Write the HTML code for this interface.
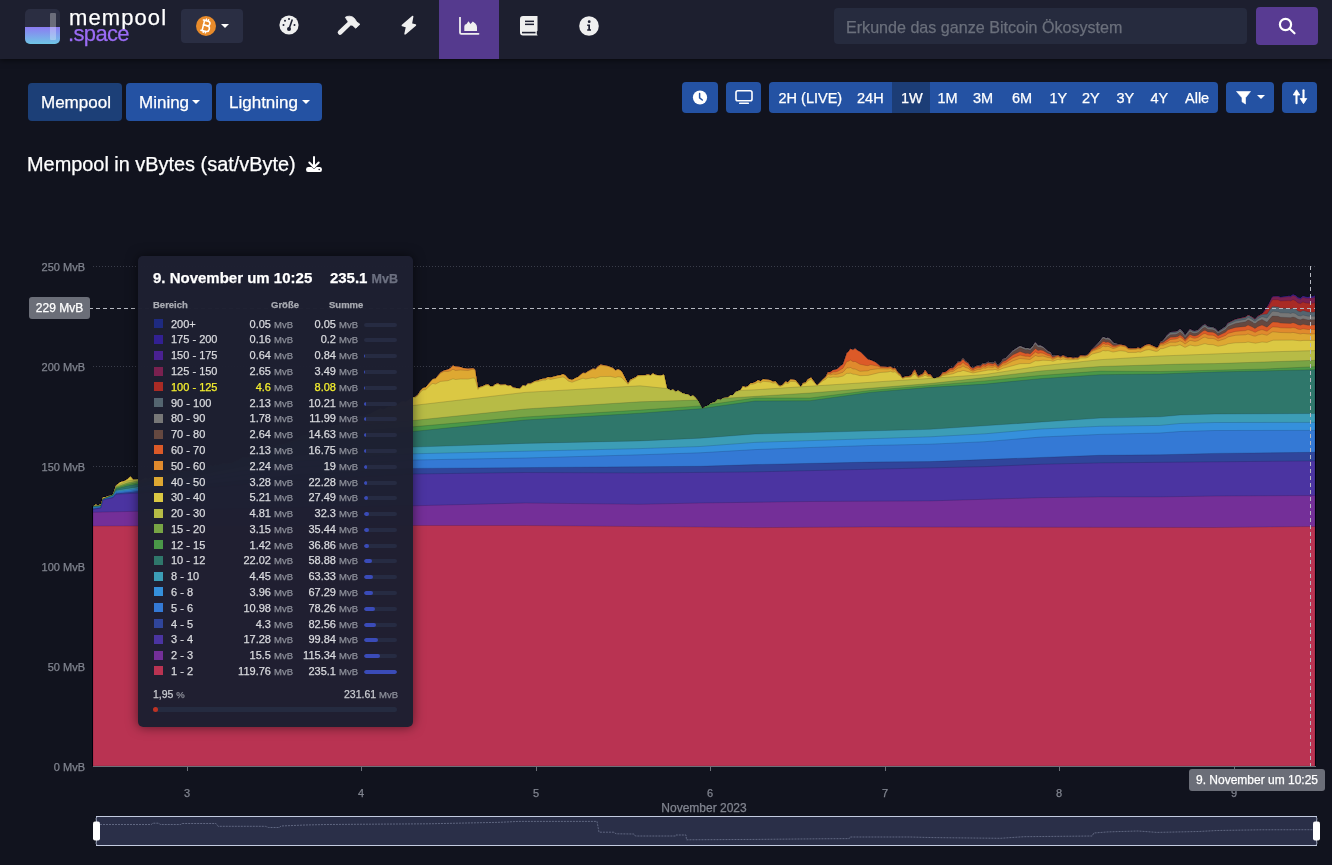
<!DOCTYPE html>
<html><head><meta charset="utf-8">
<style>
*{box-sizing:border-box;margin:0;padding:0}
html,body{-webkit-text-stroke:.25px;will-change:transform;width:1332px;height:865px;overflow:hidden;background:#11131e;font-family:"Liberation Sans",sans-serif;color:#fff}
.hdr{position:absolute;left:0;top:0;width:1332px;height:59px;background:#1d1f2f;box-shadow:0 1px 6px rgba(0,0,0,.6)}
.logo{position:absolute;left:25px;top:9px;width:35px;height:35px;border-radius:5px;overflow:hidden;background:#2b2e42}
.logo .liq{position:absolute;left:0;top:18px;width:35px;height:17px;background:linear-gradient(#8c7cf2,#6fc6e6)}
.logo .bar{position:absolute;left:25px;top:4px;width:6px;height:27px;background:rgba(255,255,255,.3);border-radius:1px}
.brand1{position:absolute;left:69px;top:5.4px;font-size:22px;letter-spacing:1.1px;color:#fff;line-height:26px}
.brand2{position:absolute;left:68px;top:20.6px;font-size:22px;letter-spacing:-.65px;color:#9b6cf5;line-height:26px}
.net{position:absolute;left:181px;top:9px;width:62px;height:34px;background:#2a2e43;border-radius:4px}
.navact{position:absolute;left:439px;top:0;width:60px;height:59px;background:#553a8e}
.ico{position:absolute}
.search{position:absolute;left:834px;top:8px;width:413px;height:36px;background:#262b3e;border-radius:4px}
.search span{position:absolute;left:12px;top:10px;font-size:16.1px;color:#6a6f7b;white-space:nowrap}
.sbtn{position:absolute;left:1256px;top:7px;width:62px;height:38px;background:#583b92;border-radius:4px}
.btn{position:absolute;top:83px;height:38px;background:#2452a3;border-radius:4px;font-size:17px;color:#fff;white-space:nowrap}
.btn span{position:absolute;top:10px}
.caret{position:absolute;width:0;height:0;border-left:4px solid transparent;border-right:4px solid transparent;border-top:4.5px solid #fff}
.tb{position:absolute;top:82px;height:31px;background:#2452a3;border-radius:4px}
.tg{position:absolute;left:769px;top:82px;width:449px;height:31px;background:#2452a3;border-radius:4px;overflow:hidden}
.tg span{position:absolute;top:8px;font-size:14.5px;color:#fff;white-space:nowrap}
.tg .act{position:absolute;left:123px;top:0;width:38px;height:31px;background:#1c3d76}
.title{position:absolute;left:27px;top:153.3px;font-size:19.9px;color:#fff;white-space:nowrap}
.ylab{position:absolute;right:1247px;font-size:11px;color:#80848f;white-space:nowrap;text-align:right}
.xlab{position:absolute;top:787px;font-size:11px;color:#80848f;white-space:nowrap;transform:translateX(-50%)}
.tip{position:absolute;left:138px;top:256px;width:275px;height:471px;background:rgba(29,31,49,.985);border-radius:5px;box-shadow:0 0 12px rgba(0,0,0,.55)}
.tip .h1{position:absolute;left:15px;top:12.5px;font-size:15px;font-weight:bold;white-space:nowrap}
.tip .h2{position:absolute;right:15px;top:12.5px;font-size:15px;font-weight:bold;white-space:nowrap}
.tip .h2 small{color:#6c7080;font-size:12.5px}
.tip .hd{position:absolute;top:43px;font-size:9.5px;font-weight:bold;color:#a9abb2;white-space:nowrap}
.tr{position:absolute;left:0;width:275px;height:15px;font-size:11px;color:#d9dade;white-space:nowrap}
.tr i{position:absolute;left:16px;top:1.5px;width:9px;height:9px}
.tr .rg{position:absolute;left:33px;top:0}
.tr .g1{position:absolute;right:120px;top:0}
.tr .g2{position:absolute;right:55px;top:0}
.tr small{font-size:9.5px;color:#8d909a}
.tr.hl span{color:#f5ef2e}
.tr.hl small{color:#8d909a}
.tr .bar{position:absolute;left:226px;top:5px;width:33px;height:4px;border-radius:2px;background:#262b42;overflow:hidden}
.tr .bar b{position:absolute;left:0;top:0;height:4px;background:#3a4bb8;border-radius:2px}
.foot1{position:absolute;left:15px;top:432px;font-size:10.5px;color:#c9cbd0}
.foot1 small{font-size:9.5px;color:#8d909a}
.foot2{position:absolute;right:15px;top:432px;font-size:10.5px;color:#c9cbd0}
.foot2 small{font-size:9.5px;color:#8d909a}
.pbar{position:absolute;left:15px;top:451px;width:244px;height:5px;border-radius:3px;background:#252b40}
.pbar b{position:absolute;left:0;top:0;width:5px;height:5px;border-radius:3px;background:#bf3223}
.ylbl{position:absolute;left:29px;top:297px;width:61px;height:22px;background:#6b6e78;border-radius:3px;font-size:12px;color:#fff;text-align:center;line-height:22px}
.xlbl{position:absolute;left:1189px;top:769px;width:136px;height:22px;background:#6b6e78;border-radius:3px;font-size:12px;color:#fff;text-align:center;line-height:22px;white-space:nowrap}
</style></head><body>
<div class="hdr">
  <div class="logo"><div class="liq"></div><div class="bar"></div></div>
  <div class="brand1">mempool</div>
  <div class="brand2">.space</div>
  <div class="net">
    <svg class="ico" style="left:14px;top:6px" width="22" height="22" viewBox="0 0 22 22"><circle cx="11" cy="11" r="10" fill="#e88b2b"/><g transform="rotate(14 11 11)" stroke="#fff" stroke-width="1.5" fill="none" stroke-linecap="round"><path d="M8.3 5.8 V16.3"/><path d="M7 5.8 H11.8 Q14.3 5.8 14.3 8.1 Q14.3 10.5 11.8 10.5 H8.3"/><path d="M8.3 10.5 H12.3 Q15 10.5 15 13.4 Q15 16.3 12.3 16.3 H7"/><path d="M9.8 4.2 V5.6 M12 4.2 V5.6 M9.8 16.5 V17.8 M12 16.5 V17.8"/></g></svg>
    <div class="caret" style="left:40px;top:15px"></div>
  </div>
  <div class="navact"></div>
  <!-- gauge -->
  <svg class="ico" style="left:279px;top:15px" width="20" height="20" viewBox="0 0 20 20"><circle cx="10" cy="10" r="9.6" fill="#efefef"/><circle cx="10" cy="14" r="2" fill="#1d1f31"/><path d="M10 14 L13.3 4.5" stroke="#1d1f31" stroke-width="1.6"/><circle cx="4.5" cy="10" r="1" fill="#1d1f31"/><circle cx="6" cy="5.7" r="1" fill="#1d1f31"/><circle cx="10" cy="4" r="1" fill="#1d1f31"/><circle cx="15.5" cy="10" r="1" fill="#1d1f31"/></svg>
  <!-- hammer -->
  <svg class="ico" style="left:330px;top:10px" width="40" height="30" viewBox="0 0 40 30"><path d="M10 22.5 L19 13.8" stroke="#efefef" stroke-width="4.6" stroke-linecap="round"/><path d="M15.3 7.3 Q16.5 6.2 19.5 6.2 Q22.5 6.3 24.5 8.5 L26.3 11.3 L27.3 12.3 L29.9 14.3 L25.8 18.2 L23.6 16.4 L22.6 15.4 L20.2 14.8 L18.3 12 Z" fill="#efefef" stroke="#efefef" stroke-width=".8" stroke-linejoin="round"/></svg>
  <!-- bolt -->
  <svg class="ico" style="left:401px;top:15px" width="16" height="21" viewBox="0 0 16 21"><path d="M11.6 1.6 L1.4 10.4 L5.6 11.8 L4.1 18.8 L14.4 10.1 L10.2 9 Z" fill="#efefef" stroke="#efefef" stroke-width="1.6" stroke-linejoin="round"/></svg>
  <!-- chart -->
  <svg class="ico" style="left:459px;top:17px" width="21" height="18" viewBox="0 0 21 18"><path d="M1 0.5 V15.5 Q1 16.8 2.3 16.8 H19.5" fill="none" stroke="#efefef" stroke-width="1.8" stroke-linecap="round"/><path d="M5.3 14 V9.5 Q5.3 7 7.5 7 L9.5 4.3 L11.5 7 L13.8 4.5 L16.4 6.5 Q18 8 18 10 V14 Z" fill="#efefef"/></svg>
  <!-- book -->
  <svg class="ico" style="left:520px;top:16px" width="18" height="20" viewBox="0 0 18 20"><path d="M3 0 H17.5 V14.8 L16.8 15.5 V18.2 L17.5 19 V19.5 H3 Q0 19.5 0 16.5 V3 Q0 0 3 0 Z" fill="#efefef"/><rect x="2" y="15.8" width="13.5" height="1.6" fill="#1d1f31"/><rect x="5" y="4.6" width="9" height="1.5" fill="#1d1f31"/><rect x="5" y="7.6" width="9" height="1.5" fill="#1d1f31"/></svg>
  <!-- info -->
  <svg class="ico" style="left:579px;top:15.5px" width="20" height="20" viewBox="0 0 20 20"><circle cx="10" cy="10" r="9.8" fill="#efefef"/><circle cx="10.2" cy="5.7" r="1.4" fill="#1d1f31"/><path d="M8.2 8.5 H11 V13.3 H12 V14.8 H8.2 V13.3 H9.3 V10 H8.2 Z" fill="#1d1f31"/></svg>
  <div class="search"><span>Erkunde das ganze Bitcoin Ökosystem</span></div>
  <div class="sbtn"><svg class="ico" style="left:20px;top:9px" width="22" height="20" viewBox="0 0 22 20"><circle cx="9.5" cy="8.5" r="5.6" fill="none" stroke="#fff" stroke-width="2.2"/><path d="M13.5 12.5 L18.5 17.3" stroke="#fff" stroke-width="2.2" stroke-linecap="round"/></svg></div>
</div>

<div class="btn" style="left:28px;width:94px;background:#1c3f77"><span style="left:13px">Mempool</span></div>
<div class="btn" style="left:126px;width:86px"><span style="left:13px">Mining</span><div class="caret" style="left:66px;top:17px"></div></div>
<div class="btn" style="left:216px;width:106px"><span style="left:13px">Lightning</span><div class="caret" style="left:85.5px;top:17px"></div></div>

<div class="tb" style="left:682px;width:36px"><svg class="ico" style="left:10px;top:7.5px" width="16" height="16" viewBox="0 0 16 16"><circle cx="8" cy="7.5" r="7.1" fill="#fff"/><path d="M7.6 3.5 V7.8 L10.3 10" stroke="#2452a3" stroke-width="1.5" fill="none" stroke-linecap="round"/></svg></div>
<div class="tb" style="left:726px;width:35px"><svg class="ico" style="left:9px;top:8px" width="18" height="15" viewBox="0 0 18 15"><rect x="1" y="0.8" width="16" height="10" rx="1.8" fill="none" stroke="#fff" stroke-width="1.6"/><rect x="4" y="12.6" width="10" height="1.5" rx=".7" fill="#fff"/></svg></div>
<div class="tg">
  <div class="act"></div>
  <span style="left:9.5px">2H (LIVE)</span>
  <span style="left:88px">24H</span>
  <span style="left:132px">1W</span>
  <span style="left:168.5px">1M</span>
  <span style="left:204px">3M</span>
  <span style="left:243px">6M</span>
  <span style="left:280.5px">1Y</span>
  <span style="left:313px">2Y</span>
  <span style="left:347.5px">3Y</span>
  <span style="left:381.5px">4Y</span>
  <span style="left:416px">Alle</span>
</div>
<div class="tb" style="left:1226px;width:48px"><svg class="ico" style="left:10px;top:8.5px" width="16" height="14" viewBox="0 0 16 14"><path d="M0.5 0.5 H14.5 L9.5 6.8 V13 L6 10.8 V6.8 Z" fill="#fff" stroke="#fff" stroke-width=".6" stroke-linejoin="round"/></svg><div class="caret" style="left:31px;top:13px"></div></div>
<div class="tb" style="left:1282px;width:35px"><svg class="ico" style="left:10px;top:7px" width="16" height="16" viewBox="0 0 16 16"><path d="M4.5 4 V14.3" stroke="#fff" stroke-width="2.1" stroke-linecap="round"/><path d="M1.2 6 L4.5 0.8 L7.8 6 Z" fill="#fff" stroke="#fff" stroke-width=".8" stroke-linejoin="round"/><path d="M11.5 1.2 V11.5" stroke="#fff" stroke-width="2.1" stroke-linecap="round"/><path d="M8.2 9.5 L11.5 14.7 L14.8 9.5 Z" fill="#fff" stroke="#fff" stroke-width=".8" stroke-linejoin="round"/></svg></div>

<div class="title">Mempool in vBytes (sat/vByte)</div>
<svg class="ico" style="left:305px;top:156px" width="18" height="17" viewBox="0 0 18 17"><path d="M9 1 V10" stroke="#fff" stroke-width="2" stroke-linecap="round"/><path d="M4.3 6.5 L9 11.2 L13.7 6.5" stroke="#fff" stroke-width="2" fill="none" stroke-linecap="round" stroke-linejoin="round"/><path d="M3 11 H6.5 L9 13 L11.5 11 H15 Q17 11 17 13.5 Q17 16 15 16 H3 Q1 16 1 13.5 Q1 11 3 11 Z" fill="#fff"/><circle cx="14.2" cy="13.5" r=".8" fill="#11131f"/></svg>

<svg style="position:absolute;left:0;top:0" width="1332" height="865">
  <g stroke="#3a3d4a" stroke-width="1" stroke-dasharray="1 2">
    <line x1="93" y1="266.5" x2="1315" y2="266.5"/>
    <line x1="93" y1="366.5" x2="1315" y2="366.5"/>
    <line x1="93" y1="466.5" x2="1315" y2="466.5"/>
    <line x1="93" y1="566.5" x2="1315" y2="566.5"/>
    <line x1="93" y1="666.5" x2="1315" y2="666.5"/>
  </g>
  <g stroke="rgba(10,10,20,.3)" stroke-width=".5"><polygon fill="#1e2a80" points="93,766 93,506.4 95.5,504.5 98,505.2 101,503.9 103,497.2 105.5,497.3 108,496.1 110.5,495.7 113,494.2 116,485.6 120.5,481.9 123,481.5 125.5,480.4 128,478.8 130,476.8 130.5,476.6 133,479.4 135.5,479.8 138,479.3 140.5,481.0 145.5,477.8 148,479.3 153,476.5 155.5,478.0 160.5,475.5 168,475.4 170.5,474.3 178,473.1 180.5,471.3 183,471.1 185.5,471.8 188,470.7 190.5,470.9 195.5,469.7 198,468.5 200.5,468.7 205.5,466.8 208,467.2 210.5,465.2 213,466.6 215.5,464.8 218,465.2 223,463.6 230.5,463.4 233,462.8 235.5,460.9 238,460.5 243,457.3 248,457.7 253,454.8 255.5,454.7 258,451.7 263,450.3 265.5,450.5 268,448.5 270.5,449.3 278,445.1 283,444.7 285.5,443.4 293,440.9 298,438.5 300.5,436.7 303,435.8 305.5,435.7 308,435.0 313,432.0 315.5,431.8 320.5,429.2 323,430.5 325.5,427.7 328,428.5 333,425.4 335.5,424.8 338,425.2 340.5,423.2 343,423.6 345.5,422.3 348,420.2 350.5,420.4 358,416.7 360.5,416.0 363,416.8 368,414.3 370.5,414.1 373,412.3 380.5,408.5 383,409.7 385.5,408.7 388,406.8 390.5,407.1 395.5,404.5 398,404.5 400.5,402.2 403,401.0 405.5,402.1 413,397.2 415.5,396.8 418,394.6 420.5,390.5 423,388.0 425.5,387.5 433,379.0 435.5,378.5 440.5,372.5 444,370.4 448,369.4 450.5,368.0 453,365.6 455.5,366.6 460.5,367.0 463,367.9 468,368.8 473,368.3 475,369.3 478,387.6 483,386.1 485.5,384.8 488,384.3 490.5,386.2 493,386.2 495.5,384.1 498,383.6 500.5,384.8 505.5,384.5 508,385.7 510.5,385.3 513,387.6 520,388.6 523,385.3 525.5,386.1 528,383.6 530.5,383.6 535,380.9 538,380.6 540.5,379.3 543,378.7 545.5,378.6 548,376.9 550.5,377.6 558,375.5 560.5,375.2 563,374.1 565.5,375.6 568,378.5 572,380.1 575.5,377.9 578,377.0 583,372.8 585.5,373.1 588,371.3 593,368.6 595.5,369.0 598,366.3 600.5,364.6 608,365.9 613,368.1 615.5,370.3 618,369.2 620.5,370.3 622,371.9 628,383.5 630.5,379.5 635.5,377.3 638,375.2 645.5,375.1 648,374.3 650.5,375.3 653,373.3 655.5,374.7 660.5,375.6 664,374.4 667,388.4 670.5,390.3 673,389.6 675.5,391.7 678,390.6 683,393.6 688,394.5 690.5,396.2 693,395.5 695,397.2 698,400.8 702,408.4 703,408.6 705.5,406.2 708,405.8 710.5,403.4 715.5,401.7 718,399.2 720.5,399.9 723,397.9 728,397.5 730.5,395.2 733,395.1 735.5,392.1 740.5,389.9 743,386.1 745.5,387.1 748,385.9 750.5,383.2 753,382.9 755.5,381.9 758,380.1 760.5,381.2 763,379.2 770,380.0 773,381.7 775.5,381.2 778,384.4 780,386.1 783,384.5 785.5,381.6 788,382.3 790.5,379.6 795.5,380.0 800.5,386.6 801,386.7 803,383.1 805.5,382.5 808,379.3 811,377.4 817,385.4 825.5,376.8 828,372.0 830.5,371.9 833,370.0 835.5,369.7 838,368.5 840.5,366.0 843,364.3 847,352.5 848,352.3 850.5,348.8 853,350.0 855,348.6 858,350.8 860.5,351.9 868,359.4 870.5,359.9 875.5,362.3 880.5,366.5 888,366.9 890.5,366.4 893,368.3 895,367.8 898,372.3 900.5,374.5 902,377.3 903,377.6 905.5,376.3 908,376.3 910.5,375.4 912,373.8 913,371.4 915,369.4 918,376.1 923,373.4 925,370.1 925.5,370.2 928,373.9 930.5,374.2 933,378.0 935,378.5 935.5,377.9 938,377.5 940.5,375.5 943,372.1 945.5,371.9 950.5,367.9 953,367.7 958,361.6 960.5,361.2 963,358.0 965.5,361.1 968,362.4 970.5,366.4 973,368.0 975.5,366.2 978,365.3 980.5,365.8 983,363.0 985.5,363.6 988,361.8 993,362.6 995,361.2 998,365.3 1000.5,362.8 1003,359.1 1005.5,358.3 1013,350.5 1020,346.0 1025.5,348.2 1028,348.1 1030,349.0 1033,345.7 1035,342.6 1035.5,342.6 1038,345.6 1040.5,345.6 1043,346.7 1048,351.2 1050.5,352.3 1052,355.0 1053,355.8 1058,355.1 1060.5,356.7 1063,355.1 1065.5,356.6 1068,357.2 1070.5,356.9 1073,358.0 1075.5,357.3 1078,357.7 1080.5,355.1 1085.5,355.5 1088,354.4 1089,353.6 1090.5,350.9 1098,343.2 1103,336.9 1105,337.5 1105.5,338.2 1108,337.8 1110.5,339.3 1113,342.5 1115.5,343.6 1125.5,345.7 1128,348.0 1130.5,348.5 1136,348.3 1138,347.6 1140.5,348.2 1145.5,344.9 1149,344.0 1155.5,346.9 1156,347.6 1158,346.9 1160.5,341.7 1163,340.4 1167,335.2 1170.5,332.1 1175.5,331.8 1178,330.8 1180,328.7 1183,331.8 1185,335.2 1190,328.9 1193,330.7 1195,331.1 1198,330.0 1203,325.2 1205,324.3 1208,326.7 1213,327.2 1215.5,328.7 1218,331.4 1225.5,326.5 1228,323.1 1235.5,319.3 1245.5,317.1 1248,315.1 1249,315.2 1253,317.6 1254,318.8 1255.5,318.7 1258,316.1 1262,313.8 1263,312.7 1268,305.5 1272,297.3 1273,296.5 1278,296.1 1280.5,297.0 1289,295.7 1290.5,296.0 1293,294.4 1295.5,295.2 1298,297.5 1300.5,298.0 1303,295.9 1305.5,296.8 1308,296.9 1310.5,296.3 1313,296.4 1315,295.6 1315,766"/>
<polygon fill="#322092" points="93,766 93,506.4 95.5,504.5 98,505.2 101,503.9 103,497.2 105.5,497.3 108,496.1 110.5,495.7 113,494.2 116,485.6 120.5,481.9 123,481.5 125.5,480.4 128,478.8 130,476.8 130.5,476.6 133,479.4 135.5,479.8 138,479.3 140.5,481.0 145.5,477.8 148,479.3 153,476.5 155.5,478.0 160.5,475.5 168,475.4 170.5,474.3 178,473.1 180.5,471.3 183,471.1 185.5,471.8 188,470.7 190.5,470.9 195.5,469.7 198,468.5 200.5,468.7 205.5,466.8 208,467.2 210.5,465.2 213,466.6 215.5,464.8 218,465.2 223,463.6 230.5,463.4 233,462.8 235.5,460.9 238,460.5 243,457.3 248,457.7 253,454.8 255.5,454.7 258,451.7 263,450.3 265.5,450.5 268,448.5 270.5,449.3 278,445.1 283,444.7 285.5,443.4 293,440.9 298,438.5 300.5,436.7 303,435.8 305.5,435.7 308,435.0 313,432.0 315.5,431.8 320.5,429.2 323,430.5 325.5,427.7 328,428.5 333,425.4 335.5,424.8 338,425.2 340.5,423.2 343,423.6 345.5,422.3 348,420.2 350.5,420.4 358,416.7 360.5,416.0 363,416.8 368,414.3 370.5,414.1 373,412.3 380.5,408.5 383,409.7 385.5,408.7 388,406.8 390.5,407.1 395.5,404.5 398,404.5 400.5,402.2 403,401.0 405.5,402.1 413,397.2 415.5,396.8 418,394.6 420.5,390.5 423,388.0 425.5,387.5 433,379.0 435.5,378.5 440.5,372.5 444,370.4 448,369.4 450.5,368.0 453,365.6 455.5,366.6 460.5,367.0 463,367.9 468,368.8 473,368.3 475,369.3 478,387.6 483,386.1 485.5,384.8 488,384.3 490.5,386.2 493,386.2 495.5,384.1 498,383.6 500.5,384.8 505.5,384.5 508,385.7 510.5,385.3 513,387.6 520,388.6 523,385.3 525.5,386.1 528,383.6 530.5,383.6 535,380.9 538,380.6 540.5,379.3 543,378.7 545.5,378.6 548,376.9 550.5,377.6 558,375.5 560.5,375.2 563,374.1 565.5,375.6 568,378.5 572,380.1 575.5,377.9 578,377.0 583,372.8 585.5,373.1 588,371.3 593,368.6 595.5,369.0 598,366.3 600.5,364.6 608,365.9 613,368.1 615.5,370.3 618,369.2 620.5,370.3 622,371.9 628,383.5 630.5,379.5 635.5,377.3 638,375.2 645.5,375.1 648,374.3 650.5,375.3 653,373.3 655.5,374.7 660.5,375.6 664,374.4 667,388.4 670.5,390.3 673,389.6 675.5,391.7 678,390.6 683,393.6 688,394.5 690.5,396.2 693,395.5 695,397.2 698,400.8 702,408.4 703,408.6 705.5,406.2 708,405.8 710.5,403.4 715.5,401.7 718,399.2 720.5,399.9 723,397.9 728,397.5 730.5,395.2 733,395.1 735.5,392.1 740.5,389.9 743,386.1 745.5,387.1 748,385.9 750.5,383.2 753,382.9 755.5,381.9 758,380.1 760.5,381.2 763,379.2 770,380.0 773,381.7 775.5,381.2 778,384.4 780,386.1 783,384.5 785.5,381.6 788,382.3 790.5,379.6 795.5,380.0 800.5,386.6 801,386.7 803,383.1 805.5,382.5 808,379.3 811,377.4 817,385.4 825.5,376.8 828,372.0 830.5,371.9 833,370.0 835.5,369.7 838,368.5 840.5,366.0 843,364.3 847,352.5 848,352.3 850.5,348.8 853,350.0 855,348.6 858,350.8 860.5,351.9 868,359.4 870.5,359.9 875.5,362.3 880.5,366.5 888,366.9 890.5,366.4 893,368.3 895,367.8 898,372.3 900.5,374.5 902,377.3 903,377.6 905.5,376.3 908,376.3 910.5,375.4 912,373.8 913,371.4 915,369.4 918,376.1 923,373.4 925,370.1 925.5,370.2 928,373.9 930.5,374.2 933,378.0 935,378.5 935.5,377.9 938,377.5 940.5,375.5 943,372.1 945.5,371.9 950.5,367.9 953,367.7 958,361.6 960.5,361.2 963,358.0 965.5,361.1 968,362.4 970.5,366.4 973,368.0 975.5,366.2 978,365.3 980.5,365.8 983,363.0 985.5,363.6 988,361.8 993,362.6 995,361.2 998,365.3 1000.5,362.8 1003,359.1 1005.5,358.3 1013,350.5 1020,346.0 1025.5,348.2 1028,348.1 1030,349.0 1033,345.7 1035,342.6 1035.5,342.6 1038,345.6 1040.5,345.6 1043,346.7 1048,351.2 1050.5,352.3 1052,355.0 1053,355.8 1058,355.1 1060.5,356.7 1063,355.1 1065.5,356.6 1068,357.2 1070.5,356.9 1073,358.0 1075.5,357.3 1078,357.7 1080.5,355.1 1085.5,355.5 1088,354.4 1089,353.6 1090.5,350.9 1098,343.2 1103,336.9 1105,337.5 1105.5,338.2 1108,337.8 1110.5,339.3 1113,342.5 1115.5,343.6 1125.5,345.7 1128,348.0 1130.5,348.5 1136,348.3 1138,347.6 1140.5,348.2 1145.5,344.9 1149,344.0 1155.5,346.9 1156,347.6 1158,346.9 1160.5,341.7 1163,340.4 1167,335.2 1170.5,332.1 1175.5,331.8 1178,330.8 1180,328.7 1183,331.8 1185,335.2 1190,328.9 1193,330.7 1195,331.1 1198,330.0 1203,325.2 1205,324.3 1208,326.7 1213,327.2 1215.5,328.7 1218,331.4 1225.5,326.5 1228,323.1 1235.5,319.3 1245.5,317.1 1248,315.1 1249,315.2 1253,317.6 1254,318.8 1255.5,318.7 1258,316.1 1262,313.8 1263,312.7 1268,305.5 1272,297.3 1273,296.5 1278,296.1 1280.5,297.1 1289,295.8 1290.5,296.1 1293,294.4 1295.5,295.2 1298,297.6 1300.5,298.0 1303,295.9 1305.5,296.8 1308,297.0 1310.5,296.4 1313,296.5 1315,295.6 1315,766"/>
<polygon fill="#4a2192" points="93,766 93,506.4 95.5,504.5 98,505.2 101,503.9 103,497.2 105.5,497.3 108,496.1 110.5,495.7 113,494.2 116,485.6 120.5,481.9 123,481.5 125.5,480.4 128,478.8 130,476.8 130.5,476.6 133,479.4 135.5,479.8 138,479.3 140.5,481.0 145.5,477.8 148,479.3 153,476.5 155.5,478.0 160.5,475.5 168,475.4 170.5,474.3 178,473.1 180.5,471.3 183,471.1 185.5,471.8 188,470.7 190.5,470.9 195.5,469.7 198,468.5 200.5,468.7 205.5,466.8 208,467.2 210.5,465.2 213,466.6 215.5,464.8 218,465.2 223,463.6 230.5,463.4 233,462.8 235.5,460.9 238,460.5 243,457.3 248,457.7 253,454.8 255.5,454.7 258,451.7 263,450.3 265.5,450.5 268,448.5 270.5,449.3 278,445.1 283,444.7 285.5,443.4 293,440.9 298,438.5 300.5,436.7 303,435.8 305.5,435.7 308,435.0 313,432.0 315.5,431.8 320.5,429.2 323,430.5 325.5,427.7 328,428.5 333,425.4 335.5,424.8 338,425.2 340.5,423.2 343,423.6 345.5,422.3 348,420.2 350.5,420.4 358,416.7 360.5,416.0 363,416.8 368,414.3 370.5,414.1 373,412.3 380.5,408.5 383,409.7 385.5,408.7 388,406.8 390.5,407.1 395.5,404.5 398,404.5 400.5,402.2 403,401.0 405.5,402.1 413,397.2 415.5,396.8 418,394.6 420.5,390.5 423,388.0 425.5,387.5 433,379.0 435.5,378.5 440.5,372.5 444,370.4 448,369.4 450.5,368.0 453,365.6 455.5,366.6 460.5,367.0 463,367.9 468,368.8 473,368.3 475,369.3 478,387.6 483,386.1 485.5,384.8 488,384.3 490.5,386.2 493,386.2 495.5,384.1 498,383.6 500.5,384.8 505.5,384.5 508,385.7 510.5,385.3 513,387.6 520,388.6 523,385.3 525.5,386.1 528,383.6 530.5,383.6 535,380.9 538,380.6 540.5,379.3 543,378.7 545.5,378.6 548,376.9 550.5,377.6 558,375.5 560.5,375.2 563,374.1 565.5,375.6 568,378.5 572,380.1 575.5,377.9 578,377.0 583,372.8 585.5,373.1 588,371.3 593,368.6 595.5,369.0 598,366.3 600.5,364.6 608,365.9 613,368.1 615.5,370.3 618,369.2 620.5,370.3 622,371.9 628,383.5 630.5,379.5 635.5,377.3 638,375.2 645.5,375.1 648,374.3 650.5,375.3 653,373.3 655.5,374.7 660.5,375.6 664,374.4 667,388.4 670.5,390.3 673,389.6 675.5,391.7 678,390.6 683,393.6 688,394.5 690.5,396.2 693,395.5 695,397.2 698,400.8 702,408.4 703,408.6 705.5,406.2 708,405.8 710.5,403.4 715.5,401.7 718,399.2 720.5,399.9 723,397.9 728,397.5 730.5,395.2 733,395.1 735.5,392.1 740.5,389.9 743,386.1 745.5,387.1 748,385.9 750.5,383.2 753,382.9 755.5,381.9 758,380.1 760.5,381.2 763,379.2 770,380.0 773,381.7 775.5,381.2 778,384.4 780,386.1 783,384.5 785.5,381.6 788,382.3 790.5,379.6 795.5,380.0 800.5,386.6 801,386.7 803,383.1 805.5,382.5 808,379.3 811,377.4 817,385.4 825.5,376.8 828,372.0 830.5,371.9 833,370.0 835.5,369.7 838,368.5 840.5,366.0 843,364.3 847,352.5 848,352.3 850.5,348.8 853,350.0 855,348.6 858,350.8 860.5,351.9 868,359.4 870.5,359.9 875.5,362.3 880.5,366.5 888,366.9 890.5,366.4 893,368.3 895,367.8 898,372.3 900.5,374.5 902,377.3 903,377.6 905.5,376.3 908,376.3 910.5,375.4 912,373.8 913,371.4 915,369.4 918,376.1 923,373.4 925,370.1 925.5,370.2 928,373.9 930.5,374.2 933,378.0 935,378.5 935.5,377.9 938,377.5 940.5,375.5 943,372.1 945.5,371.9 950.5,367.9 953,367.7 958,361.6 960.5,361.2 963,358.0 965.5,361.1 968,362.4 970.5,366.4 973,368.0 975.5,366.2 978,365.3 980.5,365.8 983,363.0 985.5,363.6 988,361.8 993,362.6 995,361.2 998,365.3 1000.5,362.8 1003,359.1 1005.5,358.3 1013,350.5 1020,346.0 1025.5,348.2 1028,348.1 1030,349.0 1033,345.7 1035,342.6 1035.5,342.6 1038,345.6 1040.5,345.6 1043,346.7 1048,351.2 1050.5,352.3 1052,355.0 1053,355.8 1058,355.1 1060.5,356.7 1063,355.1 1065.5,356.6 1068,357.2 1070.5,356.9 1073,358.0 1075.5,357.3 1078,357.7 1080.5,355.1 1085.5,355.5 1088,354.4 1089,353.6 1090.5,350.9 1098,343.2 1103,336.9 1105,337.5 1105.5,338.2 1108,337.8 1110.5,339.3 1113,342.5 1115.5,343.6 1125.5,345.7 1128,348.0 1130.5,348.5 1136,348.3 1138,347.6 1140.5,348.2 1145.5,344.9 1149,344.0 1155.5,346.9 1156,347.6 1158,346.9 1160.5,341.7 1163,340.4 1167,335.2 1170.5,332.1 1175.5,331.8 1178,330.8 1180,328.7 1183,331.8 1185,335.2 1190,328.9 1193,330.7 1195,331.1 1198,330.0 1203,325.2 1205,324.3 1208,326.7 1213,327.2 1215.5,328.7 1218,331.4 1225.5,326.5 1228,323.1 1235.5,319.3 1245.5,317.1 1248,315.1 1249,315.2 1253,317.6 1254,318.8 1255.5,318.7 1258,316.1 1262,313.8 1263,312.7 1268,305.5 1272,297.3 1273,296.6 1278,296.2 1280.5,297.2 1289,295.9 1290.5,296.2 1293,294.6 1295.5,295.4 1298,297.8 1300.5,298.2 1303,296.1 1305.5,297.0 1308,297.2 1310.5,296.7 1313,296.8 1315,295.9 1315,766"/>
<polygon fill="#7a2150" points="93,766 93,506.4 95.5,504.5 98,505.2 101,503.9 103,497.2 105.5,497.3 108,496.1 110.5,495.7 113,494.2 116,485.6 120.5,481.9 123,481.5 125.5,480.4 128,478.8 130,476.8 130.5,476.6 133,479.4 135.5,479.8 138,479.3 140.5,481.0 145.5,477.8 148,479.3 153,476.5 155.5,478.0 160.5,475.5 168,475.4 170.5,474.3 178,473.1 180.5,471.3 183,471.1 185.5,471.8 188,470.7 190.5,470.9 195.5,469.7 198,468.5 200.5,468.7 205.5,466.8 208,467.2 210.5,465.2 213,466.6 215.5,464.8 218,465.2 223,463.6 230.5,463.4 233,462.8 235.5,460.9 238,460.5 243,457.3 248,457.7 253,454.8 255.5,454.7 258,451.7 263,450.3 265.5,450.5 268,448.5 270.5,449.3 278,445.1 283,444.7 285.5,443.4 293,440.9 298,438.5 300.5,436.7 303,435.8 305.5,435.7 308,435.0 313,432.0 315.5,431.8 320.5,429.2 323,430.5 325.5,427.7 328,428.5 333,425.4 335.5,424.8 338,425.2 340.5,423.2 343,423.6 345.5,422.3 348,420.2 350.5,420.4 358,416.7 360.5,416.0 363,416.8 368,414.3 370.5,414.1 373,412.3 380.5,408.5 383,409.7 385.5,408.7 388,406.8 390.5,407.1 395.5,404.5 398,404.5 400.5,402.2 403,401.0 405.5,402.1 413,397.2 415.5,396.8 418,394.6 420.5,390.5 423,388.0 425.5,387.5 433,379.0 435.5,378.5 440.5,372.5 444,370.4 448,369.4 450.5,368.0 453,365.6 455.5,366.6 460.5,367.0 463,367.9 468,368.8 473,368.3 475,369.3 478,387.6 483,386.1 485.5,384.8 488,384.3 490.5,386.2 493,386.2 495.5,384.1 498,383.6 500.5,384.8 505.5,384.5 508,385.7 510.5,385.3 513,387.6 520,388.6 523,385.3 525.5,386.1 528,383.6 530.5,383.6 535,380.9 538,380.6 540.5,379.3 543,378.7 545.5,378.6 548,376.9 550.5,377.6 558,375.5 560.5,375.2 563,374.1 565.5,375.6 568,378.5 572,380.1 575.5,377.9 578,377.0 583,372.8 585.5,373.1 588,371.3 593,368.6 595.5,369.0 598,366.3 600.5,364.6 608,365.9 613,368.1 615.5,370.3 618,369.2 620.5,370.3 622,371.9 628,383.5 630.5,379.5 635.5,377.3 638,375.2 645.5,375.1 648,374.3 650.5,375.3 653,373.3 655.5,374.7 660.5,375.6 664,374.4 667,388.4 670.5,390.3 673,389.6 675.5,391.7 678,390.6 683,393.6 688,394.5 690.5,396.2 693,395.5 695,397.2 698,400.8 702,408.4 703,408.6 705.5,406.2 708,405.8 710.5,403.4 715.5,401.7 718,399.2 720.5,399.9 723,397.9 728,397.5 730.5,395.2 733,395.1 735.5,392.1 740.5,389.9 743,386.1 745.5,387.1 748,385.9 750.5,383.2 753,382.9 755.5,381.9 758,380.1 760.5,381.2 763,379.2 770,380.0 773,381.7 775.5,381.2 778,384.4 780,386.1 783,384.5 785.5,381.6 788,382.3 790.5,379.6 795.5,380.0 800.5,386.6 801,386.7 803,383.1 805.5,382.5 808,379.3 811,377.4 817,385.4 825.5,376.8 828,372.0 830.5,371.9 833,370.0 835.5,369.7 838,368.5 840.5,366.0 843,364.3 847,352.5 848,352.3 850.5,348.8 853,350.0 855,348.6 858,350.8 860.5,351.9 868,359.4 870.5,359.9 875.5,362.3 880.5,366.5 888,366.9 890.5,366.4 893,368.3 895,367.8 898,372.3 900.5,374.5 902,377.3 903,377.6 905.5,376.3 908,376.3 910.5,375.4 912,373.8 913,371.4 915,369.4 918,376.1 923,373.4 925,370.1 925.5,370.2 928,373.9 930.5,374.2 933,378.0 935,378.5 935.5,377.9 938,377.5 940.5,375.5 943,372.1 945.5,371.9 950.5,367.9 953,367.7 958,361.6 960.5,361.2 963,358.0 965.5,361.1 968,362.4 970.5,366.4 973,368.0 975.5,366.2 978,365.3 980.5,365.8 983,363.0 985.5,363.6 988,361.8 993,362.6 995,361.2 998,365.3 1000.5,362.8 1003,359.1 1005.5,358.3 1013,350.5 1020,346.0 1025.5,348.2 1028,348.1 1030,349.0 1033,345.7 1035,342.6 1035.5,342.6 1038,345.6 1040.5,345.6 1043,346.7 1048,351.2 1050.5,352.3 1052,355.0 1053,355.8 1058,355.1 1060.5,356.7 1063,355.1 1065.5,356.6 1068,357.2 1070.5,356.9 1073,358.0 1075.5,357.3 1078,357.7 1080.5,355.1 1085.5,355.5 1088,354.4 1089,353.6 1090.5,350.9 1098,343.2 1103,336.9 1105,337.5 1105.5,338.2 1108,337.8 1110.5,339.3 1113,342.5 1115.5,343.6 1125.5,345.7 1128,348.0 1130.5,348.5 1136,348.3 1138,347.6 1140.5,348.2 1145.5,344.9 1149,344.0 1155.5,346.9 1156,347.6 1158,346.9 1160.5,341.7 1163,340.4 1167,335.2 1170.5,332.1 1175.5,331.8 1178,330.8 1180,328.7 1183,331.8 1185,335.2 1190,328.9 1193,330.7 1195,331.1 1198,330.0 1203,325.2 1205,324.3 1208,326.7 1213,327.2 1215.5,328.7 1218,331.4 1225.5,326.5 1228,323.1 1235.5,319.3 1245.5,317.1 1248,315.1 1249,315.2 1253,317.6 1254,318.8 1255.5,318.7 1258,316.1 1262,313.8 1263,312.7 1268,305.5 1272,297.5 1273,296.8 1278,296.5 1280.5,297.6 1289,296.6 1290.5,296.9 1293,295.4 1295.5,296.3 1298,298.6 1300.5,299.2 1303,297.2 1305.5,298.1 1308,298.3 1310.5,297.9 1313,298.0 1315,297.2 1315,766"/>
<polygon fill="#a92b25" points="93,766 93,506.4 95.5,504.5 98,505.2 101,503.9 103,497.2 105.5,497.3 108,496.1 110.5,495.7 113,494.2 116,485.6 120.5,481.9 123,481.5 125.5,480.4 128,478.8 130,476.8 130.5,476.6 133,479.4 135.5,479.8 138,479.3 140.5,481.0 145.5,477.8 148,479.3 153,476.5 155.5,478.0 160.5,475.5 168,475.4 170.5,474.3 178,473.1 180.5,471.3 183,471.1 185.5,471.8 188,470.7 190.5,470.9 195.5,469.7 198,468.5 200.5,468.7 205.5,466.8 208,467.2 210.5,465.2 213,466.6 215.5,464.8 218,465.2 223,463.6 230.5,463.4 233,462.8 235.5,460.9 238,460.5 243,457.3 248,457.7 253,454.8 255.5,454.7 258,451.7 263,450.3 265.5,450.5 268,448.5 270.5,449.3 278,445.1 283,444.7 285.5,443.4 293,440.9 298,438.5 300.5,436.7 303,435.8 305.5,435.7 308,435.0 313,432.0 315.5,431.8 320.5,429.2 323,430.5 325.5,427.7 328,428.5 333,425.4 335.5,424.8 338,425.2 340.5,423.2 343,423.6 345.5,422.3 348,420.2 350.5,420.4 358,416.7 360.5,416.0 363,416.8 368,414.3 370.5,414.1 373,412.3 380.5,408.5 383,409.7 385.5,408.7 388,406.8 390.5,407.1 395.5,404.5 398,404.5 400.5,402.2 403,401.0 405.5,402.1 413,397.2 415.5,396.8 418,394.6 420.5,390.5 423,388.0 425.5,387.5 433,379.0 435.5,378.5 440.5,372.5 444,370.4 448,369.4 450.5,368.0 453,365.6 455.5,366.6 460.5,367.0 463,367.9 468,368.8 473,368.3 475,369.3 478,387.6 483,386.1 485.5,384.8 488,384.3 490.5,386.2 493,386.2 495.5,384.1 498,383.6 500.5,384.8 505.5,384.5 508,385.7 510.5,385.3 513,387.6 520,388.6 523,385.3 525.5,386.1 528,383.6 530.5,383.6 535,380.9 538,380.6 540.5,379.3 543,378.7 545.5,378.6 548,376.9 550.5,377.6 558,375.5 560.5,375.2 563,374.1 565.5,375.6 568,378.5 572,380.1 575.5,377.9 578,377.0 583,372.8 585.5,373.1 588,371.3 593,368.6 595.5,369.0 598,366.3 600.5,364.6 608,365.9 613,368.1 615.5,370.3 618,369.2 620.5,370.3 622,371.9 628,383.5 630.5,379.5 635.5,377.3 638,375.2 645.5,375.1 648,374.3 650.5,375.3 653,373.3 655.5,374.7 660.5,375.6 664,374.4 667,388.4 670.5,390.3 673,389.6 675.5,391.7 678,390.6 683,393.6 688,394.5 690.5,396.2 693,395.5 695,397.2 698,400.8 702,408.4 703,408.6 705.5,406.2 708,405.8 710.5,403.4 715.5,401.7 718,399.2 720.5,399.9 723,397.9 728,397.5 730.5,395.2 733,395.1 735.5,392.1 740.5,389.9 743,386.1 745.5,387.1 748,385.9 750.5,383.2 753,382.9 755.5,381.9 758,380.1 760.5,381.2 763,379.2 770,380.0 773,381.7 775.5,381.2 778,384.4 780,386.1 783,384.5 785.5,381.6 788,382.3 790.5,379.6 795.5,380.0 800.5,386.6 801,386.7 803,383.1 805.5,382.5 808,379.3 811,377.4 817,385.4 825.5,376.8 828,372.0 830.5,371.9 833,370.0 835.5,369.7 838,368.5 840.5,366.0 843,364.3 847,352.5 848,352.3 850.5,348.8 853,350.0 855,348.6 858,350.8 860.5,351.9 868,359.4 870.5,359.9 875.5,362.3 880.5,366.5 888,366.9 890.5,366.4 893,368.3 895,367.8 898,372.3 900.5,374.5 902,377.3 903,377.6 905.5,376.3 908,376.3 910.5,375.4 912,373.8 913,371.4 915,369.4 918,376.1 923,373.4 925,370.1 925.5,370.2 928,373.9 930.5,374.2 933,378.0 935,378.5 935.5,377.9 938,377.5 940.5,375.5 943,372.1 945.5,371.9 950.5,367.9 953,367.7 958,361.6 960.5,361.2 963,358.0 965.5,361.1 968,362.4 970.5,366.4 973,368.0 975.5,366.2 978,365.3 980.5,365.8 983,363.0 985.5,363.6 988,361.8 993,362.6 995,361.2 998,365.3 1000.5,362.8 1003,359.1 1005.5,358.3 1013,350.5 1020,346.0 1025.5,348.2 1028,348.1 1030,349.0 1033,345.7 1035,342.6 1035.5,342.6 1038,345.6 1040.5,345.6 1043,346.7 1048,351.2 1050.5,352.3 1052,355.0 1053,355.8 1058,355.1 1060.5,356.7 1063,355.1 1065.5,356.6 1068,357.2 1070.5,356.9 1073,358.0 1075.5,357.3 1078,357.7 1080.5,355.1 1085.5,355.5 1088,354.4 1089,353.6 1090.5,350.9 1098,343.2 1103,336.9 1105,337.5 1105.5,338.2 1108,337.8 1110.5,339.3 1113,342.5 1115.5,343.6 1125.5,345.7 1128,348.0 1130.5,348.5 1136,348.3 1138,347.6 1140.5,348.2 1145.5,344.9 1149,344.0 1155.5,346.9 1156,347.6 1158,346.9 1160.5,341.7 1163,340.4 1167,335.2 1170.5,332.1 1175.5,331.8 1178,330.8 1180,328.7 1183,331.8 1185,335.2 1190,328.9 1193,330.7 1195,331.1 1198,330.0 1203,325.2 1205,324.3 1208,326.7 1213,327.2 1215.5,328.7 1218,331.4 1225.5,326.5 1228,323.1 1235.5,319.3 1245.5,317.1 1248,315.1 1249,315.2 1253,317.6 1254,318.8 1255.5,318.7 1258,316.1 1263,313.1 1267,309.1 1272,300.3 1273,299.7 1278,299.8 1280.5,301.0 1289,300.6 1290.5,301.0 1293,299.7 1295.5,300.7 1298,303.0 1300.5,303.6 1303,301.9 1305.5,302.9 1308,303.2 1313,303.2 1315,302.6 1315,766"/>
<polygon fill="#546570" points="93,766 93,506.4 95.5,504.5 98,505.2 101,503.9 103,497.2 105.5,497.3 108,496.1 110.5,495.7 113,494.2 116,485.6 120.5,481.9 123,481.5 125.5,480.4 128,478.8 130,476.8 130.5,476.6 133,479.4 135.5,479.8 138,479.3 140.5,481.0 145.5,477.8 148,479.3 153,476.5 155.5,478.0 160.5,475.5 168,475.4 170.5,474.3 178,473.1 180.5,471.3 183,471.1 185.5,471.8 188,470.7 190.5,470.9 195.5,469.7 198,468.5 200.5,468.7 205.5,466.8 208,467.2 210.5,465.2 213,466.6 215.5,464.8 218,465.2 223,463.6 230.5,463.4 233,462.8 235.5,460.9 238,460.5 243,457.3 248,457.7 253,454.8 255.5,454.7 258,451.7 263,450.3 265.5,450.5 268,448.5 270.5,449.3 278,445.1 283,444.7 285.5,443.4 293,440.9 298,438.5 300.5,436.7 303,435.8 305.5,435.7 308,435.0 313,432.0 315.5,431.8 320.5,429.2 323,430.5 325.5,427.7 328,428.5 333,425.4 335.5,424.8 338,425.2 340.5,423.2 343,423.6 345.5,422.3 348,420.2 350.5,420.4 358,416.7 360.5,416.0 363,416.8 368,414.3 370.5,414.1 373,412.3 380.5,408.5 383,409.7 385.5,408.7 388,406.8 390.5,407.1 395.5,404.5 398,404.5 400.5,402.2 403,401.0 405.5,402.1 413,397.2 415.5,396.8 418,394.6 420.5,390.5 423,388.0 425.5,387.5 433,379.0 435.5,378.5 440.5,372.5 444,370.4 448,369.4 450.5,368.0 453,365.6 455.5,366.6 460.5,367.0 463,367.9 468,368.8 473,368.3 475,369.3 478,387.6 483,386.1 485.5,384.8 488,384.3 490.5,386.2 493,386.2 495.5,384.1 498,383.6 500.5,384.8 505.5,384.5 508,385.7 510.5,385.3 513,387.6 520,388.6 523,385.3 525.5,386.1 528,383.6 530.5,383.6 535,380.9 538,380.6 540.5,379.3 543,378.7 545.5,378.6 548,376.9 550.5,377.6 558,375.5 560.5,375.2 563,374.1 565.5,375.6 568,378.5 572,380.1 575.5,377.9 578,377.0 583,372.8 585.5,373.1 588,371.3 593,368.6 595.5,369.0 598,366.3 600.5,364.6 608,365.9 613,368.1 615.5,370.3 618,369.2 620.5,370.3 622,371.9 628,383.5 630.5,379.5 635.5,377.3 638,375.2 645.5,375.1 648,374.3 650.5,375.3 653,373.3 655.5,374.7 660.5,375.6 664,374.4 667,388.4 670.5,390.3 673,389.6 675.5,391.7 678,390.6 683,393.6 688,394.5 690.5,396.2 693,395.5 695,397.2 698,400.8 702,408.4 703,408.6 705.5,406.2 708,405.8 710.5,403.4 715.5,401.7 718,399.2 720.5,399.9 723,397.9 728,397.5 730.5,395.2 733,395.1 735.5,392.1 740.5,389.9 743,386.1 745.5,387.1 748,385.9 750.5,383.2 753,382.9 755.5,381.9 758,380.1 760.5,381.2 763,379.2 770,380.0 773,381.7 775.5,381.2 778,384.4 780,386.1 783,384.5 785.5,381.6 788,382.3 790.5,379.6 795.5,380.0 800.5,386.6 801,386.7 803,383.1 805.5,382.5 808,379.3 811,377.4 817,385.4 825.5,376.8 828,372.0 830.5,371.9 833,370.0 835.5,369.7 838,368.5 840.5,366.0 843,364.3 847,352.5 848,352.3 850.5,348.8 853,350.0 855,348.6 858,350.8 860.5,351.9 868,359.4 870.5,359.9 875.5,362.3 880.5,366.5 888,366.9 890.5,366.4 893,368.3 895,367.8 898,372.3 900.5,374.5 902,377.3 903,377.6 905.5,376.3 908,376.3 910.5,375.4 912,373.8 913,371.4 915,369.4 918,376.1 923,373.4 925,370.1 925.5,370.2 928,373.9 930.5,374.2 933,378.0 935,378.5 935.5,377.9 938,377.5 940.5,375.5 943,372.1 945.5,371.9 950.5,367.9 953,367.7 958,361.6 960.5,361.2 963,358.0 965.5,361.1 968,362.4 970.5,366.4 973,368.0 975.5,366.2 978,365.3 980.5,365.8 983,363.0 985.5,363.6 988,361.8 993,362.6 995,361.2 998,365.3 1000.5,362.8 1003,359.1 1005.5,358.3 1013,350.5 1020,346.0 1025.5,348.2 1028,348.1 1030,349.0 1033,345.7 1035,342.6 1035.5,342.6 1038,345.6 1040.5,345.6 1043,346.7 1048,351.2 1050.5,352.3 1052,355.0 1053,355.8 1058,355.1 1060.5,356.7 1063,355.1 1065.5,356.6 1068,357.2 1070.5,356.9 1073,358.0 1075.5,357.3 1078,357.7 1080.5,355.1 1085.5,355.5 1089,353.6 1090.5,350.9 1098,343.2 1103,336.9 1105,337.5 1105.5,338.2 1108,337.8 1110.5,339.3 1113,342.5 1115.5,343.6 1125.5,345.7 1128,348.0 1130.5,348.5 1136,348.3 1138,347.6 1140.5,348.2 1145.5,344.9 1149,344.0 1155.5,346.9 1156,347.6 1158,346.9 1160.5,341.7 1163,340.4 1167,335.2 1170.5,332.1 1175.5,331.8 1178,330.8 1180,328.7 1183,331.8 1185,335.2 1190,328.9 1193,330.7 1195,331.1 1198,330.0 1203,325.2 1205,324.3 1208,326.7 1213,327.2 1215.5,328.7 1218,331.4 1225.5,326.6 1228,323.2 1235.5,319.6 1245.5,317.5 1248,315.5 1249,315.6 1253,318.0 1254,319.2 1255.5,319.1 1258,316.6 1262,314.4 1267,314.1 1272,306.8 1273,306.4 1278,306.9 1280.5,308.1 1289,308.4 1290.5,308.9 1293,308.0 1295.5,309.0 1298,311.1 1300.5,311.7 1303,310.5 1308,311.9 1313,312.2 1315,311.8 1315,766"/>
<polygon fill="#777777" points="93,766 93,506.4 95.5,504.5 98,505.2 101,503.9 103,497.2 105.5,497.3 108,496.1 110.5,495.7 113,494.2 116,485.6 120.5,481.9 123,481.5 125.5,480.4 128,478.8 130,476.8 130.5,476.6 133,479.4 135.5,479.8 138,479.3 140.5,481.0 145.5,477.8 148,479.3 153,476.5 155.5,478.0 160.5,475.5 168,475.4 170.5,474.3 178,473.1 180.5,471.3 183,471.1 185.5,471.8 188,470.7 190.5,470.9 195.5,469.7 198,468.5 200.5,468.7 205.5,466.8 208,467.2 210.5,465.2 213,466.6 215.5,464.8 218,465.2 223,463.6 230.5,463.4 233,462.8 235.5,460.9 238,460.5 243,457.3 248,457.7 253,454.8 255.5,454.7 258,451.7 263,450.3 265.5,450.5 268,448.5 270.5,449.3 278,445.1 283,444.7 285.5,443.4 293,440.9 298,438.5 300.5,436.7 303,435.8 305.5,435.7 308,435.0 313,432.0 315.5,431.8 320.5,429.2 323,430.5 325.5,427.7 328,428.5 333,425.4 335.5,424.8 338,425.2 340.5,423.2 343,423.6 345.5,422.3 348,420.2 350.5,420.4 358,416.7 360.5,416.0 363,416.8 368,414.3 370.5,414.1 373,412.3 380.5,408.5 383,409.7 385.5,408.7 388,406.8 390.5,407.1 395.5,404.5 398,404.5 400.5,402.2 403,401.0 405.5,402.1 413,397.2 415.5,396.8 418,394.6 420.5,390.5 423,388.0 425.5,387.5 433,379.0 435.5,378.5 440.5,372.5 444,370.4 448,369.4 450.5,368.0 453,365.6 455.5,366.6 460.5,367.0 463,367.9 468,368.8 473,368.3 475,369.3 478,387.6 483,386.1 485.5,384.8 488,384.3 490.5,386.2 493,386.2 495.5,384.1 498,383.6 500.5,384.8 505.5,384.5 508,385.7 510.5,385.3 513,387.6 520,388.6 523,385.3 525.5,386.1 528,383.6 530.5,383.6 535,380.9 538,380.6 540.5,379.3 543,378.7 545.5,378.6 548,376.9 550.5,377.6 558,375.5 560.5,375.2 563,374.1 565.5,375.6 568,378.5 572,380.1 575.5,377.9 578,377.0 583,372.8 585.5,373.1 588,371.3 593,368.6 595.5,369.0 598,366.3 600.5,364.6 608,365.9 613,368.1 615.5,370.3 618,369.2 620.5,370.3 622,371.9 628,383.5 630.5,379.5 635.5,377.3 638,375.2 645.5,375.1 648,374.3 650.5,375.3 653,373.3 655.5,374.7 660.5,375.6 664,374.4 667,388.4 670.5,390.3 673,389.6 675.5,391.7 678,390.6 683,393.6 688,394.5 690.5,396.2 693,395.5 695,397.2 698,400.8 702,408.4 703,408.6 705.5,406.2 708,405.8 710.5,403.4 715.5,401.7 718,399.2 720.5,399.9 723,397.9 728,397.5 730.5,395.2 733,395.1 735.5,392.1 740.5,389.9 743,386.1 745.5,387.1 748,385.9 750.5,383.2 753,382.9 755.5,381.9 758,380.1 760.5,381.2 763,379.2 770,380.0 773,381.7 775.5,381.2 778,384.4 780,386.1 783,384.5 785.5,381.6 788,382.3 790.5,379.6 795.5,380.0 800.5,386.6 801,386.7 803,383.1 805.5,382.5 808,379.3 811,377.4 817,385.4 825.5,376.8 828,372.0 830.5,371.9 833,370.0 835.5,369.7 838,368.5 840.5,366.0 843,364.3 847,352.5 848,352.3 850.5,348.8 853,350.0 855,348.6 858,350.8 860.5,351.9 868,359.4 870.5,359.9 875.5,362.3 880.5,366.5 888,366.9 890.5,366.4 893,368.3 895,367.8 898,372.3 900.5,374.5 902,377.3 903,377.6 905.5,376.3 908,376.3 910.5,375.4 912,373.8 913,371.4 915,369.4 918,376.1 923,373.4 925,370.1 925.5,370.2 928,373.9 930.5,374.2 933,378.0 935,378.5 935.5,377.9 938,377.5 940.5,375.5 943,372.1 945.5,371.9 950.5,367.9 953,367.7 958,361.6 960.5,361.2 963,358.0 965.5,361.1 968,362.4 970.5,366.4 973,368.0 975.5,366.2 978,365.3 980.5,365.8 983,363.0 985.5,363.6 988,361.8 993,362.6 995,361.2 998,365.3 1000.5,362.8 1003,359.1 1005.5,358.3 1013,350.5 1020,346.0 1025.5,348.2 1028,348.1 1030,349.0 1033,345.7 1035,342.6 1035.5,342.6 1038,345.6 1040.5,345.6 1043,346.7 1048,351.2 1050.5,352.3 1052,355.0 1053,355.8 1058,355.1 1060.5,356.7 1063,355.1 1065.5,356.6 1068,357.2 1070.5,356.9 1073,358.0 1075.5,357.3 1078,357.7 1080.5,355.1 1085.5,355.5 1089,353.6 1090.5,350.9 1098,343.2 1103,336.9 1105,337.5 1105.5,338.2 1108,337.8 1110.5,339.3 1113,342.5 1115.5,343.6 1125.5,345.7 1128,348.0 1130.5,348.5 1136,348.3 1138,347.6 1140.5,348.2 1145.5,344.9 1149,344.0 1155.5,346.9 1156,347.6 1158,346.9 1160.5,341.9 1163,340.7 1167,335.7 1170.5,332.9 1175.5,332.8 1178,331.9 1180,330.0 1183,332.9 1185,336.1 1190,330.0 1193,331.7 1195,332.1 1198,331.0 1203,326.4 1205,325.5 1208,327.8 1213,328.2 1215.5,329.6 1218,332.3 1225.5,327.8 1228,324.6 1235.5,321.2 1245.5,319.4 1248,317.6 1249,317.7 1253,319.9 1254,321.1 1255.5,321.0 1258,318.7 1262,316.7 1267,318.1 1272,311.6 1273,311.2 1278,311.7 1280.5,312.8 1289,313.1 1290.5,313.5 1293,312.7 1295.5,313.6 1298,315.5 1300.5,316.1 1303,315.0 1308,316.2 1315,316.2 1315,766"/>
<polygon fill="#654840" points="93,766 93,506.4 95.5,504.5 98,505.2 101,503.9 103,497.2 105.5,497.3 108,496.1 110.5,495.7 113,494.2 116,485.6 120.5,481.9 123,481.5 125.5,480.4 128,478.8 130,476.8 130.5,476.6 133,479.4 135.5,479.8 138,479.3 140.5,481.0 145.5,477.8 148,479.3 153,476.5 155.5,478.0 160.5,475.5 168,475.4 170.5,474.3 178,473.1 180.5,471.3 183,471.1 185.5,471.8 188,470.7 190.5,470.9 195.5,469.7 198,468.5 200.5,468.7 205.5,466.8 208,467.2 210.5,465.2 213,466.6 215.5,464.8 218,465.2 223,463.6 230.5,463.4 233,462.8 235.5,460.9 238,460.5 243,457.3 248,457.7 253,454.8 255.5,454.7 258,451.7 263,450.3 265.5,450.5 268,448.5 270.5,449.3 278,445.1 283,444.7 285.5,443.4 293,440.9 298,438.5 300.5,436.7 303,435.8 305.5,435.7 308,435.0 313,432.0 315.5,431.8 320.5,429.2 323,430.5 325.5,427.7 328,428.5 333,425.4 335.5,424.8 338,425.2 340.5,423.2 343,423.6 345.5,422.3 348,420.2 350.5,420.4 358,416.7 360.5,416.0 363,416.8 368,414.3 370.5,414.1 373,412.3 380.5,408.5 383,409.7 385.5,408.7 388,406.8 390.5,407.1 395.5,404.5 398,404.5 400.5,402.2 403,401.0 405.5,402.1 413,397.2 415.5,396.8 418,394.6 420.5,390.5 423,388.0 425.5,387.5 433,379.0 435.5,378.5 440.5,372.5 444,370.4 448,369.4 450.5,368.0 453,365.6 455.5,366.6 460.5,367.0 463,367.9 468,368.8 473,368.3 475,369.3 478,387.6 483,386.1 485.5,384.8 488,384.3 490.5,386.2 493,386.2 495.5,384.1 498,383.6 500.5,384.8 505.5,384.5 508,385.7 510.5,385.3 513,387.6 520,388.6 523,385.3 525.5,386.1 528,383.6 530.5,383.6 535,380.9 538,380.6 540.5,379.3 543,378.7 545.5,378.6 548,376.9 550.5,377.6 558,375.5 560.5,375.2 563,374.1 565.5,375.6 568,378.5 572,380.1 575.5,377.9 578,377.0 583,372.8 585.5,373.1 588,371.3 593,368.6 595.5,369.0 598,366.3 600.5,364.6 608,365.9 613,368.1 615.5,370.3 618,369.2 620.5,370.3 622,371.9 628,383.5 630.5,379.5 635.5,377.3 638,375.2 645.5,375.1 648,374.3 650.5,375.3 653,373.3 655.5,374.7 660.5,375.6 664,374.4 667,388.4 670.5,390.3 673,389.6 675.5,391.7 678,390.6 683,393.6 688,394.5 690.5,396.2 693,395.5 695,397.2 698,400.8 702,408.4 703,408.6 705.5,406.2 708,405.8 710.5,403.4 715.5,401.7 718,399.2 720.5,399.9 723,397.9 728,397.5 730.5,395.2 733,395.1 735.5,392.1 740.5,389.9 743,386.1 745.5,387.1 748,385.9 750.5,383.2 753,382.9 755.5,381.9 758,380.1 760.5,381.2 763,379.2 770,380.0 773,381.7 775.5,381.2 778,384.4 780,386.1 783,384.5 785.5,381.6 788,382.3 790.5,379.6 795.5,380.0 800.5,386.6 801,386.7 803,383.1 805.5,382.5 808,379.3 811,377.4 817,385.4 825.5,376.8 828,372.0 830.5,371.9 833,370.0 835.5,369.7 838,368.5 840.5,366.0 843,364.3 847,352.5 848,352.3 850.5,348.8 853,350.0 855,348.6 858,350.8 860.5,351.9 868,359.4 870.5,359.9 875.5,362.3 880.5,366.5 888,366.9 890.5,366.4 893,368.3 895,367.8 898,372.3 900.5,374.5 902,377.3 903,377.6 905.5,376.3 908,376.3 910.5,375.4 912,373.8 913,371.4 915,369.4 918,376.1 923,373.4 925,370.1 925.5,370.2 928,373.9 930.5,374.2 933,378.0 935,378.5 935.5,377.9 938,377.5 940.5,375.5 943,372.1 945.5,371.9 950.5,367.9 953,367.7 958,361.6 960.5,361.2 963,358.0 965.5,361.1 968,362.4 970.5,366.4 973,368.0 975.5,366.2 978,365.3 980.5,365.8 983,363.0 985.5,363.7 988,361.9 993,362.8 995,361.5 998,365.5 1000.5,363.1 1003,359.6 1005.5,358.9 1013,351.7 1020,347.6 1025.5,349.7 1028,349.6 1030,350.5 1033,347.5 1035,344.6 1035.5,344.5 1038,347.2 1040.5,347.2 1043,348.1 1048,352.2 1050.5,353.2 1052,355.7 1053,356.4 1058,355.1 1060.5,356.7 1063,355.1 1065.5,356.6 1068,357.2 1070.5,356.9 1073,358.0 1075.5,357.3 1078,357.7 1080.5,355.1 1085.5,355.5 1088,354.4 1092,349.2 1098,344.2 1103,338.6 1105,339.1 1105.5,339.8 1108,339.4 1110.5,340.8 1113,343.6 1115.5,344.3 1120,344.4 1123,345.0 1125.5,345.7 1128,348.0 1130.5,348.5 1136,348.3 1138,347.6 1140.5,348.2 1145.5,344.9 1149,344.0 1155.5,346.9 1156,347.6 1158,346.9 1160.5,342.3 1163,341.5 1167,337.3 1170.5,334.7 1175.5,334.4 1178,333.5 1180,331.7 1183,334.4 1185,337.4 1190,331.7 1193,333.2 1195,333.6 1198,332.5 1203,328.1 1205,327.2 1208,329.4 1213,329.7 1215.5,331.0 1218,333.6 1225.5,329.4 1228,326.4 1235.5,323.4 1245.5,321.8 1248,320.1 1249,320.3 1253,322.4 1254,323.5 1255.5,323.5 1258,321.3 1262,319.5 1267,322.2 1272,316.3 1273,316.0 1278,316.3 1280.5,317.2 1290.5,317.7 1293,317.0 1295.5,317.7 1298,319.3 1300.5,319.8 1303,318.8 1308,319.9 1315,319.7 1315,766"/>
<polygon fill="#dc5a28" points="93,766 93,506.4 95.5,504.5 98,505.2 101,503.9 103,497.2 105.5,497.3 108,496.1 110.5,495.7 113,494.2 116,485.6 120.5,481.9 123,481.5 125.5,480.4 128,478.8 130,476.8 130.5,476.6 133,479.4 135.5,479.8 138,479.3 140.5,481.0 145.5,477.8 148,479.3 153,476.5 155.5,478.0 160.5,475.5 168,475.4 170.5,474.3 178,473.1 180.5,471.3 183,471.1 185.5,471.8 188,470.7 190.5,470.9 195.5,469.7 198,468.5 200.5,468.7 205.5,466.8 208,467.2 210.5,465.2 213,466.6 215.5,464.8 218,465.2 223,463.6 230.5,463.4 233,462.8 235.5,460.9 238,460.5 243,457.3 248,457.7 253,454.8 255.5,454.7 258,451.7 263,450.3 265.5,450.5 268,448.5 270.5,449.3 278,445.1 283,444.7 285.5,443.4 293,440.9 298,438.5 300.5,436.7 303,435.8 305.5,435.7 308,435.0 313,432.0 315.5,431.8 320.5,429.2 323,430.5 325.5,427.7 328,428.5 333,425.4 335.5,424.8 338,425.2 340.5,423.2 343,423.6 345.5,422.3 348,420.2 350.5,420.4 358,416.7 360.5,416.0 363,416.8 368,414.3 370.5,414.1 373,412.3 380.5,408.5 383,409.7 385.5,408.7 388,406.8 390.5,407.1 395.5,404.5 398,404.5 400.5,402.2 403,401.0 405.5,402.1 413,397.2 415.5,396.8 418,394.6 420.5,390.5 423,388.0 425.5,387.5 433,379.0 435.5,378.5 440.5,372.5 444,370.4 448,369.4 450.5,368.0 453,365.6 455.5,366.6 460.5,367.0 463,367.9 468,368.8 473,368.3 475,369.3 478,387.6 483,386.1 485.5,384.8 488,384.3 490.5,386.2 493,386.2 495.5,384.1 498,383.6 500.5,384.8 505.5,384.5 508,385.7 510.5,385.3 513,387.6 520,388.6 523,385.3 525.5,386.1 528,383.6 530.5,383.6 535,380.9 538,380.6 540.5,379.3 543,378.7 545.5,378.6 548,376.9 550.5,377.6 558,375.5 560.5,375.2 563,374.1 565.5,375.6 568,378.5 572,380.1 575.5,377.9 578,377.0 583,372.8 585.5,373.1 588,371.3 593,368.6 595.5,369.0 598,366.3 600.5,364.6 608,365.9 613,368.1 615.5,370.3 618,369.2 620.5,370.3 622,371.9 628,383.5 630.5,379.5 635.5,377.3 638,375.2 645.5,375.1 648,374.3 650.5,375.3 653,373.3 655.5,374.7 660.5,375.6 664,374.4 667,388.4 670.5,390.3 673,389.6 675.5,391.7 678,390.6 683,393.6 688,394.5 690.5,396.2 693,395.5 695,397.2 698,400.8 702,408.4 703,408.6 705.5,406.2 708,405.8 710.5,403.4 715.5,401.7 718,399.2 720.5,399.9 723,397.9 728,397.5 730.5,395.2 733,395.1 735.5,392.1 740.5,389.9 743,386.1 745.5,387.1 748,385.9 750.5,383.2 753,382.9 755.5,381.9 758,380.1 760.5,381.2 763,379.2 770,380.0 773,381.7 775.5,381.2 778,384.4 780,386.1 783,384.5 785.5,381.6 788,382.3 790.5,379.6 795.5,380.0 800.5,386.6 801,386.7 803,383.1 805.5,382.5 808,379.3 811,377.4 817,385.4 825.5,376.8 828,372.0 830.5,371.9 833,370.0 835.5,369.7 838,368.5 840.5,366.0 843,364.3 847,352.5 848,352.3 850.5,348.8 853,350.0 855,348.6 858,350.8 860.5,351.9 868,359.4 870.5,359.9 875.5,362.3 880.5,366.5 888,366.9 890.5,366.4 893,368.3 895,367.8 898,372.3 900.5,374.5 902,377.3 903,377.6 905.5,376.3 908,376.3 910.5,375.4 912,373.8 913,371.4 915,369.4 918,376.1 923,373.4 925,370.1 925.5,370.2 928,373.9 930.5,374.2 933,378.0 935,378.5 935.5,377.9 938,377.5 940.5,375.6 943,372.3 945.5,372.1 950.5,368.3 953,368.2 958,362.4 960.5,362.1 963,359.2 965.5,362.1 968,363.3 970.5,367.0 973,368.5 975.5,366.8 978,366.1 980.5,366.5 983,363.9 985.5,364.6 988,363.0 993,364.0 995,362.8 998,366.4 1000.5,364.3 1003,361.4 1005.5,360.7 1013,354.8 1020,351.6 1025.5,353.4 1028,353.3 1030,354.0 1035.5,348.5 1038,350.4 1040.5,350.1 1043,350.6 1048,353.6 1050.5,354.3 1052,356.4 1053,357.0 1058,355.3 1060.5,356.9 1063,355.3 1065.5,356.8 1068,357.4 1070.5,357.1 1073,358.1 1075.5,357.4 1078,357.8 1080.5,355.3 1085.5,355.7 1088,354.6 1092,349.5 1095.5,347.7 1100.5,344.2 1103,341.5 1105,341.8 1105.5,342.4 1108,342.0 1110.5,343.3 1113,345.4 1115.5,345.5 1120,344.4 1123,345.0 1125.5,345.7 1128,348.0 1130.5,348.5 1136,348.3 1138,347.6 1140.5,348.2 1145.5,344.9 1149,344.0 1155.5,346.9 1156,347.6 1158,346.9 1160.5,342.8 1163,342.5 1170.5,337.2 1175.5,337.1 1178,336.4 1180,334.9 1183,337.1 1185,339.7 1190,334.5 1193,335.8 1195,336.1 1198,335.0 1203,331.0 1205,330.2 1208,332.0 1213,332.2 1215.5,333.4 1218,335.8 1225.5,332.3 1228,329.8 1235.5,327.4 1245.5,326.4 1248,325.1 1253,327.2 1254,328.2 1255.5,328.2 1258,326.5 1262,325.1 1267,327.2 1272,322.4 1273,322.1 1278,322.3 1280.5,323.1 1290.5,323.4 1293,322.8 1295.5,323.4 1298,324.8 1300.5,325.2 1303,324.3 1308,325.2 1315,325.0 1315,766"/>
<polygon fill="#e08a2d" points="93,766 93,506.4 95.5,504.5 98,505.2 101,503.9 103,497.2 105.5,497.3 108,496.1 110.5,495.7 113,494.2 116,485.6 120.5,481.9 123,481.5 125.5,480.4 128,478.8 130,476.8 130.5,476.6 133,479.4 135.5,479.8 138,479.3 140.5,481.0 145.5,477.8 148,479.3 153,476.5 155.5,478.0 160.5,475.5 168,475.4 170.5,474.3 178,473.1 180.5,471.3 183,471.1 185.5,471.8 188,470.7 190.5,470.9 195.5,469.7 198,468.5 200.5,468.7 205.5,466.8 208,467.2 210.5,465.2 213,466.6 215.5,464.8 218,465.2 223,463.6 230.5,463.4 233,462.8 235.5,460.9 238,460.5 243,457.3 248,457.7 253,454.8 255.5,454.7 258,451.7 263,450.3 265.5,450.5 268,448.5 270.5,449.3 278,445.1 283,444.7 285.5,443.4 293,440.9 298,438.5 300.5,436.7 303,435.8 305.5,435.7 308,435.0 313,432.0 315.5,431.8 320.5,429.2 323,430.5 325.5,427.7 328,428.5 333,425.4 335.5,424.8 338,425.2 340.5,423.2 343,423.6 345.5,422.3 348,420.2 350.5,420.4 358,416.7 360.5,416.0 363,416.8 368,414.3 370.5,414.1 373,412.3 380.5,408.5 383,409.7 385.5,408.7 388,406.8 390.5,407.1 395.5,404.5 398,404.5 400.5,402.2 403,401.0 405.5,402.1 413,397.2 415.5,396.8 418,394.6 420.5,390.5 423,388.0 425.5,387.5 433,379.0 435.5,378.5 440.5,372.5 444,370.4 448,369.4 450.5,368.0 453,365.6 455.5,366.6 460.5,367.0 463,367.9 468,368.8 473,368.3 475,369.3 478,387.6 483,386.1 485.5,384.8 488,384.3 490.5,386.2 493,386.2 495.5,384.1 498,383.6 500.5,384.8 505.5,384.5 508,385.7 510.5,385.3 513,387.6 520,388.6 523,385.3 525.5,386.1 528,383.6 530.5,383.6 535,380.9 538,380.6 540.5,379.3 543,378.7 545.5,378.6 548,376.9 550.5,377.6 558,375.5 560.5,375.2 563,374.1 565.5,375.6 568,378.5 572,380.1 575.5,377.9 578,377.0 583,372.8 585.5,373.1 588,371.3 593,368.6 595.5,369.0 598,366.3 600.5,364.6 608,365.9 613,368.1 615.5,370.3 618,369.2 620.5,370.3 622,371.9 628,383.5 630.5,379.5 635.5,377.3 638,375.2 645.5,375.1 648,374.3 650.5,375.3 653,373.3 655.5,374.7 660.5,375.6 664,374.4 667,388.4 670.5,390.3 673,389.6 675.5,391.7 678,390.6 683,393.6 688,394.5 690.5,396.2 693,395.5 695,397.2 698,400.8 702,408.4 703,408.6 705.5,406.2 708,405.8 710.5,403.4 715.5,401.7 718,399.2 720.5,399.9 723,397.9 728,397.5 730.5,395.2 733,395.1 735.5,392.1 740.5,389.9 743,386.1 745.5,387.1 748,385.9 750.5,383.2 753,382.9 755.5,381.9 758,380.1 760.5,381.2 763,379.2 770,380.0 773,381.7 775.5,381.2 778,384.4 780,386.1 783,384.5 785.5,381.6 788,382.3 790.5,379.6 795.5,380.0 800.5,386.6 801,386.7 803,383.1 805.5,382.5 808,379.3 811,377.4 817,385.4 825.5,377.2 828,373.1 830.5,373.4 833,372.0 835.5,372.0 838,371.2 843,368.2 847,361.2 848,361.5 850.5,360.1 853,361.7 855,361.4 860,364.3 865.5,365.4 868,365.7 870.5,364.8 878,366.1 880.5,367.4 888,367.7 890.5,367.1 893,368.9 895,368.4 898,372.7 900.5,374.8 902,377.5 903,377.8 905.5,376.6 908,376.6 910.5,375.9 912,374.5 913,372.3 915,370.7 918,376.5 923,374.2 925,371.6 925.5,371.6 928,374.7 930.5,374.9 933,378.0 935,378.5 935.5,378.0 938,377.5 940.5,376.0 943,373.3 945.5,373.1 950.5,370.0 953,369.8 958,365.2 960.5,364.9 963,362.5 965.5,364.8 968,365.7 970.5,368.7 973,369.9 975.5,368.4 978,367.8 980.5,368.0 983,365.9 985.5,366.4 988,365.0 993,365.7 995,364.7 998,367.5 1003,363.3 1005.5,362.8 1013,357.8 1020,355.1 1025.5,356.3 1028,356.3 1030,356.7 1035.5,352.0 1038,353.4 1040.5,353.0 1043,353.3 1048,355.6 1050.5,356.1 1052,357.8 1053,358.1 1058,356.1 1060.5,357.5 1063,356.1 1065.5,357.4 1068,357.9 1070.5,357.6 1073,358.5 1075.5,357.9 1078,358.1 1080.5,355.9 1085.5,356.1 1088,355.1 1092,350.4 1095.5,349.0 1100.5,346.1 1103,343.7 1105,344.0 1105.5,344.6 1108,344.2 1113,347.0 1115.5,346.7 1120.5,344.9 1125.5,346.1 1128,348.4 1130.5,348.8 1136,348.7 1138,348.0 1140.5,348.5 1145.5,345.3 1149,344.4 1155.5,347.3 1156,347.9 1158,347.3 1160.5,343.8 1163,343.8 1168,341.3 1170.5,339.5 1175.5,339.1 1178,338.3 1180,336.9 1183,339.0 1185,341.3 1190,336.8 1193,338.1 1195,338.3 1198,337.5 1203,334.1 1205,333.4 1208,335.1 1213,335.3 1215.5,336.4 1218,338.4 1225.5,335.5 1228,333.4 1235.5,331.4 1245.5,330.6 1248,329.6 1253,331.3 1254,332.1 1255.5,332.2 1258,330.8 1262,329.6 1267,331.3 1272,327.2 1273,326.9 1278,327.2 1280.5,327.8 1290.5,328.1 1293,327.6 1295.5,328.0 1298,329.2 1300.5,329.5 1303,328.8 1308,329.5 1315,329.4 1315,766"/>
<polygon fill="#dea832" points="93,766 93,506.4 95.5,504.5 98,505.2 101,503.9 103,497.2 105.5,497.3 108,496.1 110.5,495.7 113,494.2 116,485.6 120.5,481.9 123,481.5 125.5,480.4 128,478.8 130,476.8 130.5,476.6 133,479.4 135.5,479.8 138,479.3 140.5,481.0 145.5,477.8 148,479.3 153,476.5 155.5,478.0 160.5,475.5 168,475.4 170.5,474.3 178,473.1 180.5,471.3 183,471.1 185.5,471.8 188,470.7 190.5,470.9 195.5,469.7 198,468.5 200.5,468.7 205.5,466.8 208,467.2 210.5,465.2 213,466.6 215.5,464.8 218,465.2 223,463.6 230.5,463.4 233,462.8 235.5,460.9 238,460.5 243,457.3 248,457.7 253,454.8 255.5,454.7 258,451.7 263,450.3 265.5,450.5 268,448.5 270.5,449.3 278,445.1 283,444.7 285.5,443.4 293,440.9 298,438.5 300.5,436.7 303,435.8 305.5,435.7 308,435.0 313,432.0 315.5,431.8 320.5,429.2 323,430.5 325.5,427.7 328,428.5 333,425.4 335.5,424.8 338,425.2 340.5,423.2 343,423.6 345.5,422.3 348,420.2 350.5,420.4 358,416.7 360.5,416.0 363,416.8 368,414.3 370.5,414.1 373,412.3 380.5,408.5 383,409.7 385.5,408.7 388,406.8 390.5,407.1 395.5,404.5 398,404.5 400.5,402.2 403,401.0 405.5,402.1 413,397.2 415.5,396.8 418,394.6 420.5,390.5 423,388.0 425.5,387.5 432,380.0 433,379.1 435.5,378.8 440.5,373.2 444,371.4 448,371.5 450.5,370.8 453,369.2 455.5,370.5 460.5,370.0 468,370.5 473,369.2 475,369.8 478,387.7 483,386.1 485.5,384.8 488,384.3 490.5,386.2 493,386.2 495.5,384.1 498,383.6 500.5,384.8 505.5,384.5 508,385.7 510.5,385.3 513,387.6 520,388.6 523,385.3 525.5,386.1 528,383.6 530.5,383.6 535,380.9 538,380.6 540.5,379.3 543,378.7 545.5,378.6 548,376.9 550.5,377.6 558,375.5 560.5,375.2 563,374.1 565.5,375.6 568,378.5 572,380.1 575.5,377.9 578,377.0 583,372.9 585.5,373.3 588,371.5 593,369.0 595.5,369.4 598,366.8 600.5,365.2 608,366.3 613,368.3 615.5,370.5 618,369.3 620.5,370.4 622,372.0 628,383.5 630.5,379.5 635.5,377.3 638,375.2 645.5,375.1 648,374.3 650.5,375.3 653,373.3 655.5,374.7 660.5,375.6 664,374.4 667,388.4 670.5,390.3 673,389.6 675.5,391.7 678,390.6 683,393.6 688,394.5 690.5,396.2 693,395.5 695,397.2 698,400.8 702,408.4 703,408.6 705.5,406.2 708,405.8 710.5,403.4 715.5,401.7 718,399.2 720.5,399.9 723,397.9 728,397.5 730.5,395.2 733,395.1 735.5,392.1 740.5,389.9 743,386.1 745.5,387.1 748,385.9 750.5,383.2 753,382.9 755.5,381.9 758,380.1 760.5,381.2 763,379.2 770,380.0 773,381.7 775.5,381.2 778,384.4 780,386.1 783,384.5 785.5,381.6 788,382.3 790.5,379.6 795.5,380.0 800.5,386.6 801,386.7 803,383.1 805.5,382.5 808,379.3 811,377.4 817,385.4 823,379.3 825.5,377.6 828,374.3 830.5,374.9 833,374.1 835.5,374.4 838,374.0 843,372.2 847,367.7 848,368.1 850.5,367.5 853,369.0 855,369.0 860,371.3 868,370.8 870.5,369.7 878,368.8 888,369.1 890.5,368.5 893,370.1 895,369.5 895.5,369.9 898,373.3 900.5,375.2 902,377.7 903,378.0 905.5,377.0 908,377.0 910.5,376.4 912,375.2 913,373.4 915,372.1 918,377.0 923,375.1 925,373.0 928,375.5 930.5,375.7 933,378.1 935,378.5 935.5,378.0 938,377.6 940.5,376.4 943,374.3 945.5,374.1 950.5,371.7 953,371.5 958,368.0 960.5,367.7 963,365.9 965.5,367.5 968,368.2 970.5,370.3 973,371.2 978,369.4 980.5,369.6 983,367.9 985.5,368.2 988,367.1 993,367.4 995,366.6 998,368.7 1003,365.3 1005.5,364.8 1013,360.8 1020,358.5 1030,359.5 1035.5,355.5 1038,356.5 1043,356.1 1048,357.6 1050.5,357.9 1052,359.2 1053,359.3 1058,356.9 1060.5,358.1 1063,356.8 1065.5,357.9 1068,358.4 1070.5,358.1 1073,358.9 1075.5,358.3 1078,358.5 1080.5,356.4 1085.5,356.6 1088,355.6 1092,351.3 1100.5,348.1 1103,346.0 1105.5,346.7 1108,346.3 1113,348.6 1115.5,348.0 1120.5,345.9 1125.5,347.0 1128,349.1 1130.5,349.5 1136,349.3 1138,348.7 1140.5,349.2 1145.5,346.2 1149,345.4 1155.5,348.0 1156,348.6 1158,348.0 1160.5,345.0 1163,345.3 1170.5,342.2 1175.5,342.3 1178,341.8 1180,340.7 1183,342.3 1185,344.1 1190,340.4 1195,341.4 1198,340.7 1203,337.7 1205,337.1 1208,338.4 1213,338.5 1215.5,339.3 1218,341.0 1225.5,338.6 1228,336.9 1235.5,335.3 1245.5,334.8 1248,334.0 1254,336.1 1255.5,336.1 1258,335.0 1262,334.1 1267,335.3 1272,332.0 1273,331.8 1280.5,332.5 1290.5,332.8 1293,332.4 1300.5,334.0 1303,333.4 1308,334.0 1315,333.9 1315,766"/>
<polygon fill="#dbc843" points="93,766 93,506.4 95.5,504.5 98,505.2 101,503.9 103,497.2 105.5,497.3 108,496.1 110.5,495.7 113,494.2 116,485.6 120.5,481.9 123,481.5 125.5,480.4 128,478.8 130,476.8 130.5,476.6 133,479.4 135.5,479.8 138,479.3 140.5,481.0 145.5,477.8 148,479.3 153,476.5 155.5,478.0 160.5,475.5 168,475.4 170.5,474.3 178,473.1 180.5,471.3 183,471.1 185.5,471.8 188,470.7 190.5,470.9 195.5,469.7 198,468.5 200.5,468.7 205.5,466.8 208,467.2 210.5,465.2 213,466.6 215.5,464.8 218,465.2 223,463.6 230.5,463.4 233,462.8 235.5,460.9 238,460.5 243,457.3 248,457.7 253,454.8 255.5,454.7 258,451.7 263,450.3 265.5,450.5 268,448.5 270.5,449.3 278,445.1 283,444.7 285.5,443.4 293,440.9 298,438.5 300.5,436.7 303,435.8 305.5,435.7 308,435.0 313,432.0 315.5,431.8 320.5,429.2 323,430.5 325.5,427.7 328,428.5 333,425.4 335.5,424.8 338,425.2 340.5,423.2 343,423.6 345.5,422.3 348,420.2 350.5,420.4 358,416.7 360.5,416.0 363,416.8 368,414.3 370.5,414.1 373,412.3 380.5,408.5 383,409.7 385.5,408.7 388,406.9 390.5,407.2 395.5,404.6 398,404.6 400.5,402.3 403,401.2 405.5,402.2 413,397.2 415.5,397.2 418,395.5 420.5,391.9 423,390.0 425.5,389.7 432,383.7 433,383.4 435.5,384.1 440.5,381.4 448,380.7 453,378.8 455.5,379.5 460.5,379.0 468,379.1 473,378.0 475,378.3 478,389.4 479,387.8 483,386.6 485.5,385.3 488,384.9 490.5,386.6 493,386.6 495.5,384.6 498,384.0 500.5,385.2 505.5,384.8 508,385.9 510.5,385.5 513,387.8 520,388.7 523,385.3 525.5,386.1 528,383.8 530.5,384.0 535,381.7 538,381.6 543,380.1 545.5,380.1 548,378.7 550.5,379.4 563,376.9 565.5,378.3 568,380.9 572,382.3 583,378.2 585.5,379.0 593,377.7 595.5,378.3 600.5,376.6 610.5,376.4 615.5,377.6 618,376.7 620.5,377.0 622,377.8 628,384.3 630.5,380.7 635.5,377.9 638,375.9 645.5,375.6 648,374.7 650.5,375.6 653,373.7 655.5,375.0 660.5,375.8 664,374.5 667,388.4 670.5,390.3 673,389.6 675.5,391.7 678,390.6 683,393.6 688,394.5 690.5,396.2 693,395.5 695,397.2 698,400.8 702,408.4 703,408.6 705.5,406.2 708,405.8 710.5,403.4 715.5,401.7 718,399.2 720.5,399.9 723,397.9 728,397.5 730.5,395.2 733,395.1 735.5,392.1 740.5,389.9 743,386.4 745.5,387.4 748,386.5 750.5,384.3 753,384.2 755.5,383.4 758,381.9 760.5,382.8 763,381.3 770,381.9 773,383.2 775.5,382.8 778,385.3 780,386.5 783,385.3 785.5,383.0 788,383.5 790.5,381.4 795.5,381.6 800.5,386.6 801,386.7 803,383.9 805.5,383.4 808,380.9 811,379.3 817,385.4 823,380.7 825.5,379.4 828,377.1 830.5,377.6 833,377.1 838,377.2 843,376.1 847,373.2 848,373.5 850.5,373.2 853,374.2 855,374.3 860,375.7 865.5,375.5 868,375.4 880,372.5 888,372.0 890.5,371.3 893,372.3 895,371.7 895.5,372.0 898,374.6 900.5,376.1 902,378.2 903,378.4 905.5,377.6 910.5,377.3 912,376.4 913,375.2 915,374.3 918,377.7 923,376.5 925,375.2 928,376.8 930.5,376.8 933,378.1 935,378.5 935.5,378.0 938,377.7 943,375.7 953,373.8 958,371.7 960.5,371.5 963,370.4 973,373.0 988,370.1 993,370.0 995,369.4 998,370.4 1003,368.3 1020,363.7 1030,363.5 1035.5,360.8 1038,360.9 1043,360.2 1050.5,360.6 1053,361.3 1058,359.3 1060.5,360.0 1063,359.0 1068,359.9 1078,359.6 1080.5,358.1 1085.5,358.0 1088,357.3 1092,354.1 1100.5,351.9 1103,350.5 1105.5,350.9 1108,350.6 1113,352.1 1120,350.7 1125.5,351.3 1128,352.5 1136,352.4 1138,351.9 1140.5,352.2 1145.5,350.2 1149,349.6 1156,351.4 1158,351.0 1160.5,348.7 1163,348.6 1170.5,345.9 1175.5,345.9 1180,344.7 1185,347.4 1190,345.0 1195,346.0 1198,345.6 1205,343.6 1208,344.5 1213,344.7 1218,346.3 1225.5,344.8 1228,343.8 1235.5,342.8 1245.5,342.5 1248,342.0 1255.5,343.2 1262,342.0 1267,342.4 1273,340.2 1293,340.1 1300.5,340.8 1303,340.4 1315,340.4 1315,766"/>
<polygon fill="#b7bb46" points="93,766 93,506.4 94,505.8 101,505.0 103,499.0 113,494.4 116,486.0 127,481.0 138,479.3 140.5,481.0 145.5,477.8 148,479.3 153,476.5 155.5,478.0 160.5,475.5 168,475.4 170.5,474.3 178,473.1 180.5,471.3 183,471.1 185.5,471.8 188,470.7 190.5,470.9 195.5,469.7 198,468.5 200.5,468.7 205.5,466.8 208,467.2 210.5,465.2 213,466.6 215.5,464.8 218,465.2 223,463.6 230.5,463.4 233,462.8 235.5,460.9 238,460.5 243,457.3 248,457.7 253,454.8 255.5,454.7 258,451.7 263,450.3 265.5,450.5 268,448.5 270.5,449.3 278,445.1 283,444.7 285.5,443.4 293,440.9 298,438.5 300.5,436.7 303,435.8 305.5,435.7 308,435.0 313,432.0 315.5,431.8 320.5,429.2 323,430.5 325.5,427.7 328,428.5 333,425.4 335.5,424.8 338,425.2 340.5,423.2 343,423.6 345.5,422.3 348,420.2 350.5,420.4 358,416.7 360.5,416.0 363,416.8 368,414.3 370.5,414.1 373,412.3 380,408.9 381,408.8 383,409.7 386.5,408.2 413,405.5 525,392.4 640,385.8 667.5,388.6 670.5,390.3 673,389.6 675.5,391.7 678,390.6 683,393.6 688,394.5 690.5,396.2 693,395.5 695,397.2 698,400.8 702,408.4 703,408.6 705.5,406.2 708,405.8 710.5,403.4 715.5,401.7 718,399.2 720.5,399.9 723,397.9 728,397.5 730.5,395.2 733,395.1 735.5,392.1 739.5,390.4 755,389.8 933.5,378.2 935,378.5 935.5,378.0 985,374.5 1040,366.0 1100,359.7 1160,356.0 1265,352.0 1315,350.6 1315,766"/>
<polygon fill="#78a445" points="93,766 93,506.4 94,506.0 101,505.2 103,499.1 113,494.6 116,487.0 127,483.0 139.5,480.5 140.5,481.0 143,479.4 146,478.5 148,479.3 153,476.5 155.5,478.0 160.5,475.5 168,475.4 170.5,474.3 178,473.1 180.5,471.3 183,471.1 185.5,471.8 188,470.7 190.5,470.9 195.5,469.7 198,468.5 200.5,468.7 205.5,466.8 208,467.2 210.5,465.2 213,466.6 215.5,464.8 218,465.2 223,463.6 230.5,463.4 233,462.8 235.5,460.9 238,460.5 243,457.3 248,457.7 253,454.8 255.5,454.7 258,451.7 263,450.3 265.5,450.5 268,448.5 270.5,449.3 278,445.1 283,444.7 285.5,443.4 293,440.9 298,438.5 300.5,436.7 303,435.8 305.5,435.7 308,435.0 313,432.0 315.5,431.8 320.5,429.2 323,430.5 325.5,427.9 328,428.5 330,427.5 413,420.5 525,409.0 640,401.8 697,400.1 698,400.8 700.5,405.0 702,408.4 703,408.6 705.5,406.2 708,405.8 710.5,403.4 715.5,401.7 718,399.2 720.5,399.9 722.5,398.4 810,393.0 930,383.5 985,377.6 1040,371.0 1100,366.5 1180,364.1 1215,363.6 1315,360.3 1315,766"/>
<polygon fill="#4a9848" points="93,766 93,506.4 101,505.4 103,499.1 113,494.8 116,488.0 127,484.5 138,482.5 154.5,477.8 155.5,478.0 157.5,476.9 163,475.3 168,475.4 170.5,474.3 178,473.1 180.5,471.3 183,471.1 185.5,471.8 188,470.7 190.5,470.9 195.5,469.7 198,468.5 200.5,468.7 205.5,466.8 208,467.2 210.5,465.2 213,466.6 215.5,464.8 218,465.2 223,463.6 230.5,463.4 233,462.8 235.5,460.9 238,460.5 243,457.3 248,457.7 253,454.8 255.5,454.7 258,451.7 263,450.3 265.5,450.5 268,448.5 270.5,449.3 278,445.1 283,444.7 285.5,443.4 293,440.9 298,438.5 300.5,436.7 303,435.8 413,426.8 525,417.0 640,410.1 700.5,405.9 701,406.1 702,408.4 703,408.6 705.5,406.2 708,405.8 709.5,404.6 755,398.0 810,398.0 870,390.5 985,380.9 1040,375.5 1100,371.1 1160,371.5 1265,369.0 1315,366.7 1315,766"/>
<polygon fill="#2f776b" points="93,766 93,506.6 101,505.7 103,499.2 113,495.0 116,489.0 127,486.0 138,484.0 184,471.5 185.5,471.8 188,470.7 190.5,470.9 195.5,469.7 198,468.5 200.5,468.7 205.5,466.8 208,467.2 210.5,465.2 213,466.6 215.5,464.8 218,465.2 223,463.6 230.5,463.4 233,462.8 235.5,460.9 238,460.5 243,457.3 248,457.7 253,454.8 255.5,454.7 258,451.7 260.5,450.9 263,450.3 265.5,450.5 268,448.7 270.5,449.3 276,446.5 300,440.0 413,431.5 525,420.0 640,413.2 703,408.6 703.5,408.2 755,401.0 810,400.7 870,392.4 930,387.3 985,384.1 1040,378.7 1100,374.7 1160,374.0 1215,372.0 1315,369.7 1315,766"/>
<polygon fill="#3c9db6" points="93,766 93,507.0 101,506.0 103,499.3 113,495.5 116,490.5 138,487.0 300,455.0 413,447.1 525,443.4 640,440.9 700,438.2 755,434.0 930,429.3 1100,418.1 1160,416.8 1180,415.0 1215,414.0 1315,413.5 1315,766"/>
<polygon fill="#3590dc" points="93,766 93,507.6 101,506.5 103,499.4 113,496.0 116,491.5 138,488.5 300,461.0 413,453.8 640,448.6 700,446.5 755,442.4 930,436.8 985,433.8 1040,429.0 1100,426.3 1160,425.4 1180,423.5 1215,422.5 1315,422.4 1315,766"/>
<polygon fill="#3479d5" points="93,766 93,508.2 101,507.0 103,499.6 113,496.5 116,492.5 138,490.0 300,467.0 413,460.0 525,458.0 640,454.8 700,452.8 755,449.6 810,447.5 870,445.5 930,444.2 985,441.7 1040,437.1 1100,434.4 1160,433.0 1180,431.5 1215,430.5 1315,430.4 1315,766"/>
<polygon fill="#30459b" points="93,766 93,508.8 101,507.5 103,499.8 113,497.0 116,493.5 300,474.5 413,468.4 700,466.3 755,464.6 870,462.1 930,461.6 1100,455.3 1160,454.8 1215,453.4 1315,452.3 1315,766"/>
<polygon fill="#4b34a1" points="93,766 93,509.4 101,508.0 103,500.0 113,497.8 116,494.3 138,493.0 300,480.0 413,474.0 525,472.5 640,473.0 755,471.9 985,466.6 1040,464.3 1100,462.9 1315,460.9 1315,766"/>
<polygon fill="#742f98" points="93,766 93,512.3 300,507.5 413,505.8 525,503.0 640,504.3 700,503.0 810,501.5 930,500.9 1040,497.7 1100,496.9 1160,496.9 1215,496.0 1315,495.5 1315,766"/>
<polygon fill="#b93352" points="93,766 93,526.1 300,525.5 525,525.5 755,527.6 870,527.0 1215,527.5 1315,526.5 1315,766"/></g>
  <line x1="93" y1="766.5" x2="1316" y2="766.5" stroke="#6e7079" stroke-width="1"/>
  <g stroke="#6e7079" stroke-width="1">
    <line x1="187.5" y1="766" x2="187.5" y2="771"/><line x1="361.5" y1="766" x2="361.5" y2="771"/><line x1="536.5" y1="766" x2="536.5" y2="771"/><line x1="710.5" y1="766" x2="710.5" y2="771"/><line x1="885.5" y1="766" x2="885.5" y2="771"/><line x1="1059.5" y1="766" x2="1059.5" y2="771"/><line x1="1234.5" y1="766" x2="1234.5" y2="771"/>
  </g>
  <line x1="89" y1="308.5" x2="1315" y2="308.5" stroke="#b5b8c0" stroke-width="1" stroke-dasharray="4 3"/>
  <line x1="1310.5" y1="266" x2="1310.5" y2="766" stroke="#b5b8c0" stroke-width="1" stroke-dasharray="4 3"/>
  <!-- datazoom -->
  <rect x="96" y="816" width="1221" height="30" fill="#2a2f48"/><path d="M96 816.5 H1317 M96 845.5 H1317" stroke="#c3cbe0" stroke-width="1.2"/><path d="M97 816.5 Q95.5 818 96.5 822 M97 845.5 Q95.5 844 96.5 840 M1316 816.5 Q1317.5 818 1316.5 822 M1316 845.5 Q1317.5 844 1316.5 840" stroke="#c3cbe0" stroke-width=".8" fill="none"/>
  <polyline fill="none" stroke="#5f6680" stroke-width="1" stroke-dasharray="2 1" points="97,824.5 151.5,824.5 152.5,823.2 159,823.2 160,824.5 180.8,824.5 181.5,823.5 216,823.5 218,826.3 265.4,826.3 268.5,827.5 279.3,827.5 281,826 305.5,825 327,824.5 428.6,823.8 500,822.3 518.5,821.4 597,821.4 599,832.2 613.9,832.2 616,833.8 633.9,834 635.4,836 675.4,836 676,835 686,835 686.5,839.8 757,839.4 820,838.8 849.3,838.6 850,837 910,837 933.8,837.6 1000.3,838.3 1024,836.7 1092.2,836 1093.8,833 1108,831.9 1138,831 1157,832.4 1198.3,831.5 1217.4,830.5 1261.7,829.8 1316,829.7"/>
  <rect x="93" y="821.5" width="7" height="19" rx="2" fill="#fff"/>
  <rect x="1313" y="821.5" width="7" height="19" rx="2" fill="#fff"/>
</svg>

<div class="ylab" style="top:260.5px">250 MvB</div>
<div class="ylab" style="top:360.5px">200 MvB</div>
<div class="ylab" style="top:460.5px">150 MvB</div>
<div class="ylab" style="top:560.5px">100 MvB</div>
<div class="ylab" style="top:660.5px">50 MvB</div>
<div class="ylab" style="top:760.5px">0 MvB</div>
<div class="xlab" style="left:187px">3</div>
<div class="xlab" style="left:361px">4</div>
<div class="xlab" style="left:536px">5</div>
<div class="xlab" style="left:710px">6</div>
<div class="xlab" style="left:885px">7</div>
<div class="xlab" style="left:1059px">8</div>
<div class="xlab" style="left:1234px">9</div>
<div class="xlab" style="left:704px;top:800.5px;font-size:12px">November 2023</div>
<div class="ylbl">229 MvB</div>
<div class="xlbl">9. November um 10:25</div>

<div class="tip">
  <div class="h1">9. November um 10:25</div>
  <div class="h2">235.1 <small>MvB</small></div>
  <div class="hd" style="left:15px">Bereich</div>
  <div class="hd" style="left:133px">Größe</div>
  <div class="hd" style="left:191px">Summe</div>
<div class="tr" style="top:61.70px"><i style="background:#1e2a80"></i><span class="rg">200+</span><span class="g1">0.05 <small>MvB</small></span><span class="g2">0.05 <small>MvB</small></span><b class="bar"><b style="width:0px"></b></b></div>
<div class="tr" style="top:77.48px"><i style="background:#322092"></i><span class="rg">175 - 200</span><span class="g1">0.16 <small>MvB</small></span><span class="g2">0.2 <small>MvB</small></span><b class="bar"><b style="width:0px"></b></b></div>
<div class="tr" style="top:93.26px"><i style="background:#4a2192"></i><span class="rg">150 - 175</span><span class="g1">0.64 <small>MvB</small></span><span class="g2">0.84 <small>MvB</small></span><b class="bar"><b style="width:1px"></b></b></div>
<div class="tr" style="top:109.04px"><i style="background:#7a2150"></i><span class="rg">125 - 150</span><span class="g1">2.65 <small>MvB</small></span><span class="g2">3.49 <small>MvB</small></span><b class="bar"><b style="width:1px"></b></b></div>
<div class="tr hl" style="top:124.82px"><i style="background:#a92b25"></i><span class="rg">100 - 125</span><span class="g1">4.6 <small>MvB</small></span><span class="g2">8.08 <small>MvB</small></span><b class="bar"><b style="width:1px"></b></b></div>
<div class="tr" style="top:140.60px"><i style="background:#546570"></i><span class="rg">90 - 100</span><span class="g1">2.13 <small>MvB</small></span><span class="g2">10.21 <small>MvB</small></span><b class="bar"><b style="width:1.5px"></b></b></div>
<div class="tr" style="top:156.38px"><i style="background:#777777"></i><span class="rg">80 - 90</span><span class="g1">1.78 <small>MvB</small></span><span class="g2">11.99 <small>MvB</small></span><b class="bar"><b style="width:1.7px"></b></b></div>
<div class="tr" style="top:172.16px"><i style="background:#654840"></i><span class="rg">70 - 80</span><span class="g1">2.64 <small>MvB</small></span><span class="g2">14.63 <small>MvB</small></span><b class="bar"><b style="width:2px"></b></b></div>
<div class="tr" style="top:187.94px"><i style="background:#dc5a28"></i><span class="rg">60 - 70</span><span class="g1">2.13 <small>MvB</small></span><span class="g2">16.75 <small>MvB</small></span><b class="bar"><b style="width:2.4px"></b></b></div>
<div class="tr" style="top:203.72px"><i style="background:#e08a2d"></i><span class="rg">50 - 60</span><span class="g1">2.24 <small>MvB</small></span><span class="g2">19 <small>MvB</small></span><b class="bar"><b style="width:2.7px"></b></b></div>
<div class="tr" style="top:219.50px"><i style="background:#dea832"></i><span class="rg">40 - 50</span><span class="g1">3.28 <small>MvB</small></span><span class="g2">22.28 <small>MvB</small></span><b class="bar"><b style="width:3.1px"></b></b></div>
<div class="tr" style="top:235.28px"><i style="background:#dbc843"></i><span class="rg">30 - 40</span><span class="g1">5.21 <small>MvB</small></span><span class="g2">27.49 <small>MvB</small></span><b class="bar"><b style="width:3.9px"></b></b></div>
<div class="tr" style="top:251.06px"><i style="background:#b7bb46"></i><span class="rg">20 - 30</span><span class="g1">4.81 <small>MvB</small></span><span class="g2">32.3 <small>MvB</small></span><b class="bar"><b style="width:4.5px"></b></b></div>
<div class="tr" style="top:266.84px"><i style="background:#78a445"></i><span class="rg">15 - 20</span><span class="g1">3.15 <small>MvB</small></span><span class="g2">35.44 <small>MvB</small></span><b class="bar"><b style="width:5px"></b></b></div>
<div class="tr" style="top:282.62px"><i style="background:#4a9848"></i><span class="rg">12 - 15</span><span class="g1">1.42 <small>MvB</small></span><span class="g2">36.86 <small>MvB</small></span><b class="bar"><b style="width:5.2px"></b></b></div>
<div class="tr" style="top:298.40px"><i style="background:#2f776b"></i><span class="rg">10 - 12</span><span class="g1">22.02 <small>MvB</small></span><span class="g2">58.88 <small>MvB</small></span><b class="bar"><b style="width:8.3px"></b></b></div>
<div class="tr" style="top:314.18px"><i style="background:#3c9db6"></i><span class="rg">8 - 10</span><span class="g1">4.45 <small>MvB</small></span><span class="g2">63.33 <small>MvB</small></span><b class="bar"><b style="width:8.9px"></b></b></div>
<div class="tr" style="top:329.96px"><i style="background:#3590dc"></i><span class="rg">6 - 8</span><span class="g1">3.96 <small>MvB</small></span><span class="g2">67.29 <small>MvB</small></span><b class="bar"><b style="width:9.4px"></b></b></div>
<div class="tr" style="top:345.74px"><i style="background:#3479d5"></i><span class="rg">5 - 6</span><span class="g1">10.98 <small>MvB</small></span><span class="g2">78.26 <small>MvB</small></span><b class="bar"><b style="width:11px"></b></b></div>
<div class="tr" style="top:361.52px"><i style="background:#30459b"></i><span class="rg">4 - 5</span><span class="g1">4.3 <small>MvB</small></span><span class="g2">82.56 <small>MvB</small></span><b class="bar"><b style="width:11.6px"></b></b></div>
<div class="tr" style="top:377.30px"><i style="background:#4b34a1"></i><span class="rg">3 - 4</span><span class="g1">17.28 <small>MvB</small></span><span class="g2">99.84 <small>MvB</small></span><b class="bar"><b style="width:14px"></b></b></div>
<div class="tr" style="top:393.08px"><i style="background:#742f98"></i><span class="rg">2 - 3</span><span class="g1">15.5 <small>MvB</small></span><span class="g2">115.34 <small>MvB</small></span><b class="bar"><b style="width:16.2px"></b></b></div>
<div class="tr" style="top:408.86px"><i style="background:#b93352"></i><span class="rg">1 - 2</span><span class="g1">119.76 <small>MvB</small></span><span class="g2">235.1 <small>MvB</small></span><b class="bar"><b style="width:33px"></b></b></div>
  <div class="foot1">1,95 <small>%</small></div>
  <div class="foot2">231.61 <small>MvB</small></div>
  <div class="pbar"><b></b></div>
</div>
</body></html>
